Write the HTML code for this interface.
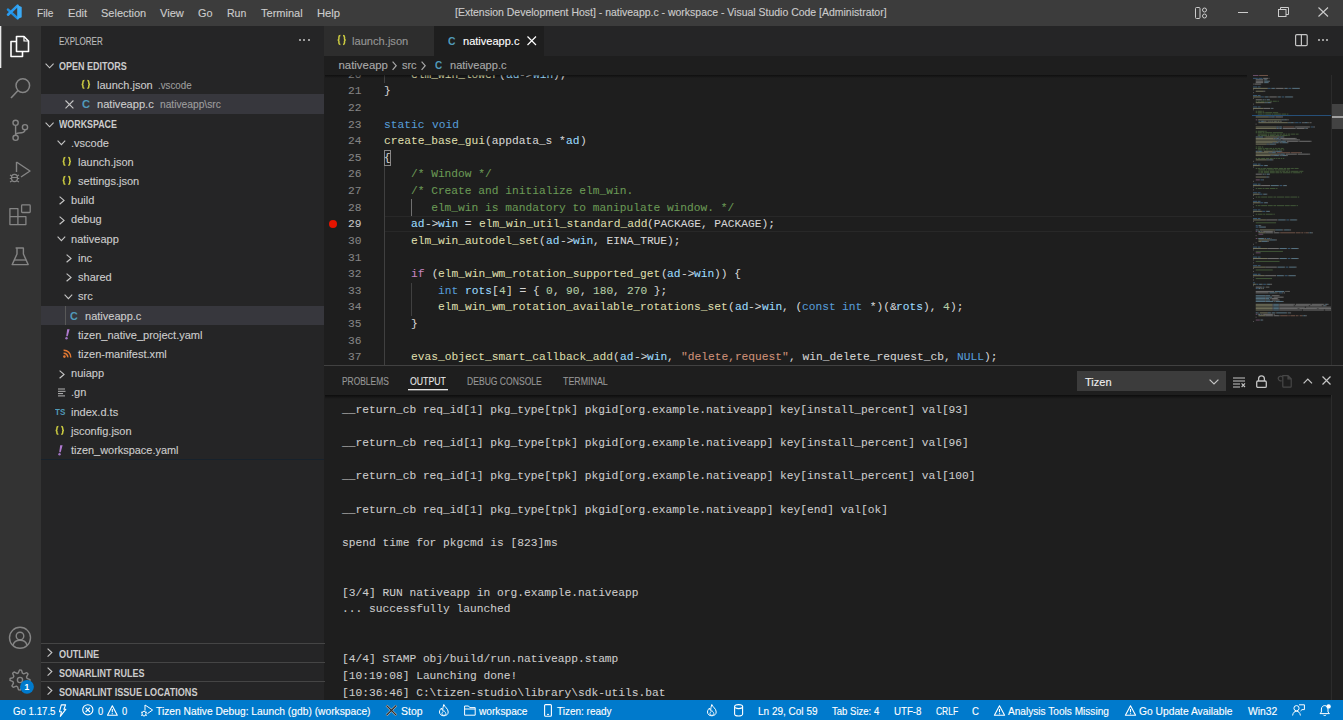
<!DOCTYPE html>
<html><head><meta charset="utf-8"><title>VS Code</title>
<style>
*{margin:0;padding:0;box-sizing:border-box}
html,body{width:1343px;height:720px;overflow:hidden;background:#1e1e1e;position:relative}
.t{position:absolute;white-space:pre}
svg{overflow:visible}
</style></head><body>
<div style="position:absolute;left:0px;top:0px;width:1343px;height:26px;background:#3c3c3c;"></div>
<div style="position:absolute;left:0px;top:26px;width:41px;height:674px;background:#333333;"></div>
<div style="position:absolute;left:41px;top:26px;width:283px;height:674px;background:#252526;"></div>
<div style="position:absolute;left:324px;top:26px;width:1019px;height:30px;background:#252526;"></div>
<div style="position:absolute;left:324px;top:56px;width:1019px;height:309px;background:#1e1e1e;"></div>
<div style="position:absolute;left:324px;top:365px;width:1019px;height:335px;background:#1e1e1e;"></div>
<div style="position:absolute;left:0px;top:700px;width:1343px;height:20px;background:#007acc;"></div>
<svg style="position:absolute;left:0px;top:0px;" width="26" height="26" viewBox="0 0 26 26"><path d="M8 9.6 L17.6 18.4" stroke="#1f8fe0" stroke-width="2.6" stroke-linecap="round"/><path d="M8 14.7 L17.6 5.6" stroke="#2a9cf0" stroke-width="2.6" stroke-linecap="round"/><path d="M17.2 4.9 L21.7 7 V17.2 L17.2 19.3 Z" fill="#3aaaf5"/></svg>
<div class="t" style="left:36.70px;top:7.75px;font:400 11.4px/11.4px 'Liberation Sans',sans-serif;color:#cccccc;transform:scaleX(0.8935);transform-origin:0 0;-webkit-text-stroke:0.12px currentColor;">File</div>
<div class="t" style="left:67.60px;top:7.75px;font:400 11.4px/11.4px 'Liberation Sans',sans-serif;color:#cccccc;transform:scaleX(0.9731);transform-origin:0 0;-webkit-text-stroke:0.12px currentColor;">Edit</div>
<div class="t" style="left:100.80px;top:7.75px;font:400 11.4px/11.4px 'Liberation Sans',sans-serif;color:#cccccc;transform:scaleX(0.9646);transform-origin:0 0;-webkit-text-stroke:0.12px currentColor;">Selection</div>
<div class="t" style="left:160.30px;top:7.75px;font:400 11.4px/11.4px 'Liberation Sans',sans-serif;color:#cccccc;transform:scaleX(0.9762);transform-origin:0 0;-webkit-text-stroke:0.12px currentColor;">View</div>
<div class="t" style="left:198.20px;top:7.75px;font:400 11.4px/11.4px 'Liberation Sans',sans-serif;color:#cccccc;transform:scaleX(0.9543);transform-origin:0 0;-webkit-text-stroke:0.12px currentColor;">Go</div>
<div class="t" style="left:227.00px;top:7.75px;font:400 11.4px/11.4px 'Liberation Sans',sans-serif;color:#cccccc;transform:scaleX(0.9236);transform-origin:0 0;-webkit-text-stroke:0.12px currentColor;">Run</div>
<div class="t" style="left:261.10px;top:7.75px;font:400 11.4px/11.4px 'Liberation Sans',sans-serif;color:#cccccc;transform:scaleX(0.9688);transform-origin:0 0;-webkit-text-stroke:0.12px currentColor;">Terminal</div>
<div class="t" style="left:316.60px;top:7.75px;font:400 11.4px/11.4px 'Liberation Sans',sans-serif;color:#cccccc;transform:scaleX(0.9861);transform-origin:0 0;-webkit-text-stroke:0.12px currentColor;">Help</div>
<div class="t" style="left:455.40px;top:6.91px;font:400 10.5px/10.5px 'Liberation Sans',sans-serif;color:#cccccc;transform:scaleX(0.9971);transform-origin:0 0;-webkit-text-stroke:0.12px currentColor;">[Extension Development Host] - nativeapp.c - workspace - Visual Studio Code [Administrator]</div>
<svg style="position:absolute;left:1195px;top:7px;" width="13" height="12" viewBox="0 0 13 12"><rect x="0.5" y="0.5" width="4.5" height="11" rx="1" fill="none" stroke="#cccccc"/><circle cx="9.5" cy="3" r="2" fill="none" stroke="#cccccc"/><circle cx="9.5" cy="9" r="2" fill="none" stroke="#cccccc"/></svg>
<div style="position:absolute;left:1238px;top:12px;width:10px;height:1px;background:#cccccc;"></div>
<svg style="position:absolute;left:1278px;top:7px;" width="11" height="10" viewBox="0 0 11 10"><rect x="0.5" y="2.5" width="7.5" height="7" fill="none" stroke="#cccccc"/><path d="M2.5 2.5 V0.5 H10.5 V7.5 H8" fill="none" stroke="#cccccc"/></svg>
<svg style="position:absolute;left:1318px;top:7px;" width="11" height="10" viewBox="0 0 11 10"><path d="M0.5 0.5 L10 9.5 M10 0.5 L0.5 9.5" stroke="#cccccc" stroke-width="1.1"/></svg>
<div style="position:absolute;left:0px;top:26px;width:1px;height:42px;background:#e8e8e8;"></div>
<div style="position:absolute;left:1px;top:26px;width:1px;height:42px;background:#6a6a6a;"></div>
<svg style="position:absolute;left:10px;top:35px;" width="20" height="23" viewBox="0 0 20 23"><path d="M6.5 1.5 H14 L18.5 6 V16.5 H6.5 Z" fill="none" stroke="#ffffff" stroke-width="1.6" stroke-linejoin="round"/><path d="M14 1.5 V6 H18.5" fill="none" stroke="#ffffff" stroke-width="1.2"/><path d="M6.5 6.5 H1 V21.5 H12.5 V16.5" fill="none" stroke="#ffffff" stroke-width="1.6" stroke-linejoin="round"/></svg>
<svg style="position:absolute;left:9px;top:76px;" width="24" height="24" viewBox="0 0 24 24"><circle cx="13.8" cy="9.6" r="6.8" fill="none" stroke="#858585" stroke-width="1.5"/><path d="M9 14.5 L2 22" stroke="#858585" stroke-width="1.6"/></svg>
<svg style="position:absolute;left:10px;top:117px;" width="22" height="24" viewBox="0 0 22 24"><circle cx="5.6" cy="5.8" r="2.6" fill="none" stroke="#858585" stroke-width="1.4"/><circle cx="5.6" cy="20.8" r="2.6" fill="none" stroke="#858585" stroke-width="1.4"/><circle cx="15" cy="10.2" r="2.6" fill="none" stroke="#858585" stroke-width="1.4"/><path d="M5.6 8.4 V18.2 M15 12.8 C15 16 12 16 9 16 C7 16 5.6 17 5.6 18" fill="none" stroke="#858585" stroke-width="1.4"/></svg>
<svg style="position:absolute;left:8px;top:160px;" width="26" height="24" viewBox="0 0 26 24"><path d="M8.5 2 V12 M8.5 2 L22 11 L13 17" fill="none" stroke="#858585" stroke-width="1.4" stroke-linejoin="round"/><ellipse cx="6.5" cy="18" rx="3" ry="3.6" fill="none" stroke="#858585" stroke-width="1.3"/><path d="M2 15 L3.8 16 M11 15 L9.2 16 M1.8 18.5 H3.5 M11.2 18.5 H9.5 M2 22 L3.8 21 M11 22 L9.2 21 M3.5 17.5 H9.5" stroke="#858585" stroke-width="1.1"/></svg>
<svg style="position:absolute;left:9px;top:204px;" width="23" height="22" viewBox="0 0 23 22"><path d="M0.9 4.6 H8.9 V12.6 H16.9 V20.6 H0.9 Z M0.9 12.6 H8.9 V20.6" fill="none" stroke="#858585" stroke-width="1.3" stroke-linejoin="round"/><rect x="12.6" y="0.9" width="8.6" height="7.6" rx="0.8" fill="none" stroke="#858585" stroke-width="1.3"/></svg>
<svg style="position:absolute;left:11px;top:246px;" width="19" height="21" viewBox="0 0 19 21"><path d="M4.6 2 H12.8 M6 2 V8 L1.2 18.6 H17.2 L12.4 8 V2" fill="none" stroke="#858585" stroke-width="1.4" stroke-linejoin="round"/><path d="M3.2 14 H15.2" stroke="#858585" stroke-width="1.3"/></svg>
<svg style="position:absolute;left:8px;top:626px;" width="24" height="24" viewBox="0 0 24 24"><circle cx="12" cy="11.8" r="10.5" fill="none" stroke="#858585" stroke-width="1.4"/><circle cx="12" cy="10" r="3.8" fill="none" stroke="#858585" stroke-width="1.4"/><path d="M5 19.2 C6 15.5 9 14.3 12 14.3 C15 14.3 18 15.5 19 19.2" fill="none" stroke="#858585" stroke-width="1.4"/></svg>
<svg style="position:absolute;left:8px;top:668px;" width="24" height="24" viewBox="0 0 24 24"><path d="M21.99 11.54 L21.89 13.49 L18.77 14.44 L18.17 15.72 L19.39 18.74 L17.93 20.05 L15.06 18.52 L13.73 18.99 L12.46 21.99 L10.51 21.89 L9.56 18.77 L8.28 18.17 L5.26 19.39 L3.95 17.93 L5.48 15.06 L5.01 13.73 L2.01 12.46 L2.11 10.51 L5.23 9.56 L5.83 8.28 L4.61 5.26 L6.07 3.95 L8.94 5.48 L10.27 5.01 L11.54 2.01 L13.49 2.11 L14.44 5.23 L15.72 5.83 L18.74 4.61 L20.05 6.07 L18.52 8.94 L18.99 10.27 Z" fill="none" stroke="#858585" stroke-width="1.4" stroke-linejoin="round"/><circle cx="12" cy="12" r="2.6" fill="none" stroke="#858585" stroke-width="1.4"/></svg>
<svg style="position:absolute;left:20px;top:680px;" width="14" height="14" viewBox="0 0 14 14"><circle cx="7" cy="6.8" r="6.9" fill="#007acc"/></svg>
<div class="t" style="left:24.60px;top:683.30px;font:700 8.5px/8.5px 'Liberation Sans',sans-serif;color:#ffffff;">1</div>
<div class="t" style="left:58.60px;top:35.76px;font:400 10.8px/10.8px 'Liberation Sans',sans-serif;color:#bbbbbb;transform:scaleX(0.7432);transform-origin:0 0;-webkit-text-stroke:0.12px currentColor;">EXPLORER</div>
<div style="position:absolute;left:299.0px;top:39px;width:2px;height:2px;background:#c5c5c5;border-radius:1px"></div>
<div style="position:absolute;left:303.3px;top:39px;width:2px;height:2px;background:#c5c5c5;border-radius:1px"></div>
<div style="position:absolute;left:307.6px;top:39px;width:2px;height:2px;background:#c5c5c5;border-radius:1px"></div>
<svg style="position:absolute;left:45.3px;top:63.0px;" width="9.2" height="5.6" viewBox="0 0 9.2 5.6"><path d="M0.6 0.6 L4.6 4.8 L8.6 0.6" fill="none" stroke="#c5c5c5" stroke-width="1.1"/></svg>
<div class="t" style="left:58.50px;top:61.07px;font:700 10.9px/10.9px 'Liberation Sans',sans-serif;color:#cccccc;transform:scaleX(0.8258);transform-origin:0 0;">OPEN EDITORS</div>
<svg style="position:absolute;left:81.3px;top:79.80000000000001px;" width="9.7" height="8.8" viewBox="0 0 9.7 8.8"><path d="M3.4 0.6 Q1.9 0.6 1.9 1.9 V3.30 Q1.9 4.40 0.6 4.40 Q1.9 4.40 1.9 5.50 V6.90 Q1.9 8.20 3.4 8.20 M6.30 0.6 Q7.80 0.6 7.80 1.9 V3.30 Q7.80 4.40 9.10 4.40 Q7.80 4.40 7.80 5.50 V6.90 Q7.80 8.20 6.30 8.20" fill="none" stroke="#cbcb41" stroke-width="1.5"/></svg>
<div class="t" style="left:97.30px;top:79.55px;font:400 11.4px/11.4px 'Liberation Sans',sans-serif;color:#cccccc;transform:scaleX(0.9666);transform-origin:0 0;-webkit-text-stroke:0.12px currentColor;">launch.json</div>
<div class="t" style="left:158.40px;top:80.31px;font:400 10.5px/10.5px 'Liberation Sans',sans-serif;color:#9d9d9d;transform:scaleX(0.9285);transform-origin:0 0;-webkit-text-stroke:0.12px currentColor;">.vscode</div>
<div style="position:absolute;left:41px;top:94px;width:283px;height:20px;background:#37373d;"></div>
<svg style="position:absolute;left:65.2px;top:100px;" width="9" height="9" viewBox="0 0 9 9"><path d="M0.5 0.5 L8.4 8.4 M8.4 0.5 L0.5 8.4" stroke="#c5c5c5" stroke-width="1.1"/></svg>
<div class="t" style="left:81.60px;top:98.89px;font:700 11px/11px 'Liberation Sans',sans-serif;color:#519aba;transform:scaleX(1.0197);transform-origin:0 0;">C</div>
<div class="t" style="left:97.30px;top:98.65px;font:400 11.4px/11.4px 'Liberation Sans',sans-serif;color:#cccccc;transform:scaleX(0.9732);transform-origin:0 0;-webkit-text-stroke:0.12px currentColor;">nativeapp.c</div>
<div class="t" style="left:159.50px;top:99.41px;font:400 10.5px/10.5px 'Liberation Sans',sans-serif;color:#9d9d9d;transform:scaleX(0.9736);transform-origin:0 0;-webkit-text-stroke:0.12px currentColor;">nativeapp\src</div>
<svg style="position:absolute;left:45.3px;top:121.6px;" width="9.2" height="5.6" viewBox="0 0 9.2 5.6"><path d="M0.6 0.6 L4.6 4.8 L8.6 0.6" fill="none" stroke="#c5c5c5" stroke-width="1.1"/></svg>
<div class="t" style="left:58.50px;top:119.07px;font:700 10.9px/10.9px 'Liberation Sans',sans-serif;color:#cccccc;transform:scaleX(0.8133);transform-origin:0 0;">WORKSPACE</div>
<div style="position:absolute;left:41px;top:306px;width:283px;height:19px;background:#37373d;"></div>
<div style="position:absolute;left:65px;top:306px;width:1px;height:19px;background:#585858;"></div>
<svg style="position:absolute;left:57.2px;top:140.29999999999998px;" width="8.8" height="5.4" viewBox="0 0 8.8 5.4"><path d="M0.6 0.6 L4.4 4.6000000000000005 L8.200000000000001 0.6" fill="none" stroke="#c5c5c5" stroke-width="1.1"/></svg>
<div class="t" style="left:70.80px;top:137.65px;font:400 11.4px/11.4px 'Liberation Sans',sans-serif;color:#cccccc;transform:scaleX(0.9670);transform-origin:0 0;-webkit-text-stroke:0.12px currentColor;">.vscode</div>
<svg style="position:absolute;left:62.2px;top:156.6px;" width="9.6" height="8.8" viewBox="0 0 9.6 8.8"><path d="M3.4 0.6 Q1.9 0.6 1.9 1.9 V3.30 Q1.9 4.40 0.6 4.40 Q1.9 4.40 1.9 5.50 V6.90 Q1.9 8.20 3.4 8.20 M6.20 0.6 Q7.70 0.6 7.70 1.9 V3.30 Q7.70 4.40 9.00 4.40 Q7.70 4.40 7.70 5.50 V6.90 Q7.70 8.20 6.20 8.20" fill="none" stroke="#cbcb41" stroke-width="1.5"/></svg>
<div class="t" style="left:77.50px;top:156.75px;font:400 11.4px/11.4px 'Liberation Sans',sans-serif;color:#cccccc;transform:scaleX(0.9670);transform-origin:0 0;-webkit-text-stroke:0.12px currentColor;">launch.json</div>
<svg style="position:absolute;left:62.2px;top:175.79999999999998px;" width="9.6" height="8.8" viewBox="0 0 9.6 8.8"><path d="M3.4 0.6 Q1.9 0.6 1.9 1.9 V3.30 Q1.9 4.40 0.6 4.40 Q1.9 4.40 1.9 5.50 V6.90 Q1.9 8.20 3.4 8.20 M6.20 0.6 Q7.70 0.6 7.70 1.9 V3.30 Q7.70 4.40 9.00 4.40 Q7.70 4.40 7.70 5.50 V6.90 Q7.70 8.20 6.20 8.20" fill="none" stroke="#cbcb41" stroke-width="1.5"/></svg>
<div class="t" style="left:77.50px;top:175.95px;font:400 11.4px/11.4px 'Liberation Sans',sans-serif;color:#cccccc;transform:scaleX(0.9670);transform-origin:0 0;-webkit-text-stroke:0.12px currentColor;">settings.json</div>
<svg style="position:absolute;left:58.8px;top:196.39999999999998px;" width="5.8" height="8.8" viewBox="0 0 5.8 8.8"><path d="M0.6 0.6 L5.0 4.4 L0.6 8.200000000000001" fill="none" stroke="#c5c5c5" stroke-width="1.2"/></svg>
<div class="t" style="left:70.80px;top:195.15px;font:400 11.4px/11.4px 'Liberation Sans',sans-serif;color:#cccccc;transform:scaleX(0.9670);transform-origin:0 0;-webkit-text-stroke:0.12px currentColor;">build</div>
<svg style="position:absolute;left:58.8px;top:215.6px;" width="5.8" height="8.8" viewBox="0 0 5.8 8.8"><path d="M0.6 0.6 L5.0 4.4 L0.6 8.200000000000001" fill="none" stroke="#c5c5c5" stroke-width="1.2"/></svg>
<div class="t" style="left:70.80px;top:214.35px;font:400 11.4px/11.4px 'Liberation Sans',sans-serif;color:#cccccc;transform:scaleX(0.9670);transform-origin:0 0;-webkit-text-stroke:0.12px currentColor;">debug</div>
<svg style="position:absolute;left:57.2px;top:236.2px;" width="8.8" height="5.4" viewBox="0 0 8.8 5.4"><path d="M0.6 0.6 L4.4 4.6000000000000005 L8.200000000000001 0.6" fill="none" stroke="#c5c5c5" stroke-width="1.1"/></svg>
<div class="t" style="left:70.80px;top:233.55px;font:400 11.4px/11.4px 'Liberation Sans',sans-serif;color:#cccccc;transform:scaleX(0.9670);transform-origin:0 0;-webkit-text-stroke:0.12px currentColor;">nativeapp</div>
<svg style="position:absolute;left:65.8px;top:254.00000000000003px;" width="5.8" height="8.8" viewBox="0 0 5.8 8.8"><path d="M0.6 0.6 L5.0 4.4 L0.6 8.200000000000001" fill="none" stroke="#c5c5c5" stroke-width="1.2"/></svg>
<div class="t" style="left:78.00px;top:252.75px;font:400 11.4px/11.4px 'Liberation Sans',sans-serif;color:#cccccc;transform:scaleX(0.9670);transform-origin:0 0;-webkit-text-stroke:0.12px currentColor;">inc</div>
<svg style="position:absolute;left:65.8px;top:273.20000000000005px;" width="5.8" height="8.8" viewBox="0 0 5.8 8.8"><path d="M0.6 0.6 L5.0 4.4 L0.6 8.200000000000001" fill="none" stroke="#c5c5c5" stroke-width="1.2"/></svg>
<div class="t" style="left:78.00px;top:271.95px;font:400 11.4px/11.4px 'Liberation Sans',sans-serif;color:#cccccc;transform:scaleX(0.9670);transform-origin:0 0;-webkit-text-stroke:0.12px currentColor;">shared</div>
<svg style="position:absolute;left:63.8px;top:294.0px;" width="8.8" height="5.4" viewBox="0 0 8.8 5.4"><path d="M0.6 0.6 L4.4 4.6000000000000005 L8.200000000000001 0.6" fill="none" stroke="#c5c5c5" stroke-width="1.1"/></svg>
<div class="t" style="left:78.00px;top:291.35px;font:400 11.4px/11.4px 'Liberation Sans',sans-serif;color:#cccccc;transform:scaleX(0.9670);transform-origin:0 0;-webkit-text-stroke:0.12px currentColor;">src</div>
<div class="t" style="left:70.00px;top:310.89px;font:700 11px/11px 'Liberation Sans',sans-serif;color:#519aba;transform:scaleX(0.9819);transform-origin:0 0;">C</div>
<div class="t" style="left:85.00px;top:310.65px;font:400 11.4px/11.4px 'Liberation Sans',sans-serif;color:#cccccc;transform:scaleX(0.9670);transform-origin:0 0;-webkit-text-stroke:0.12px currentColor;">nativeapp.c</div>
<svg style="position:absolute;left:65.0px;top:329.3px;" width="5" height="11" viewBox="0 0 5 11"><path d="M2.2 0.3 L4.6 0.3 L2.7 7.2 L1.2 7.2 Z" fill="#b07ad0"/><circle cx="1.5" cy="9.2" r="1.2" fill="#a074c4"/></svg>
<div class="t" style="left:78.00px;top:329.85px;font:400 11.4px/11.4px 'Liberation Sans',sans-serif;color:#cccccc;transform:scaleX(0.9687);transform-origin:0 0;-webkit-text-stroke:0.12px currentColor;">tizen_native_project.yaml</div>
<svg style="position:absolute;left:63.0px;top:349.1px;" width="9" height="9" viewBox="0 0 9 9"><circle cx="1.4" cy="7.6" r="1.3" fill="#e37933"/><path d="M0.6 4.2 A4 4 0 0 1 4.8 8.4 M0.6 1.2 A7 7 0 0 1 7.8 8.4" fill="none" stroke="#e37933" stroke-width="1.5"/></svg>
<div class="t" style="left:78.00px;top:348.95px;font:400 11.4px/11.4px 'Liberation Sans',sans-serif;color:#cccccc;transform:scaleX(0.9670);transform-origin:0 0;-webkit-text-stroke:0.12px currentColor;">tizen-manifest.xml</div>
<svg style="position:absolute;left:58.8px;top:369.50000000000006px;" width="5.8" height="8.8" viewBox="0 0 5.8 8.8"><path d="M0.6 0.6 L5.0 4.4 L0.6 8.200000000000001" fill="none" stroke="#c5c5c5" stroke-width="1.2"/></svg>
<div class="t" style="left:70.80px;top:368.25px;font:400 11.4px/11.4px 'Liberation Sans',sans-serif;color:#cccccc;transform:scaleX(0.9670);transform-origin:0 0;-webkit-text-stroke:0.12px currentColor;">nuiapp</div>
<svg style="position:absolute;left:57.5px;top:387.6px;" width="8" height="9" viewBox="0 0 8 9"><path d="M0 1 H7 M0 3.3 H7.5 M0 5.6 H5 M0 7.9 H7" stroke="#c5c5c5" stroke-width="0.9"/></svg>
<div class="t" style="left:70.80px;top:387.45px;font:400 11.4px/11.4px 'Liberation Sans',sans-serif;color:#cccccc;transform:scaleX(0.9670);transform-origin:0 0;-webkit-text-stroke:0.12px currentColor;">.gn</div>
<div class="t" style="left:55.00px;top:408.42px;font:700 8.6px/8.6px 'Liberation Sans',sans-serif;color:#519aba;transform:scaleX(0.9380);transform-origin:0 0;">TS</div>
<div class="t" style="left:70.80px;top:406.65px;font:400 11.4px/11.4px 'Liberation Sans',sans-serif;color:#cccccc;transform:scaleX(0.9670);transform-origin:0 0;-webkit-text-stroke:0.12px currentColor;">index.d.ts</div>
<svg style="position:absolute;left:55.0px;top:425.7px;" width="9.6" height="8.8" viewBox="0 0 9.6 8.8"><path d="M3.4 0.6 Q1.9 0.6 1.9 1.9 V3.30 Q1.9 4.40 0.6 4.40 Q1.9 4.40 1.9 5.50 V6.90 Q1.9 8.20 3.4 8.20 M6.20 0.6 Q7.70 0.6 7.70 1.9 V3.30 Q7.70 4.40 9.00 4.40 Q7.70 4.40 7.70 5.50 V6.90 Q7.70 8.20 6.20 8.20" fill="none" stroke="#cbcb41" stroke-width="1.5"/></svg>
<div class="t" style="left:70.80px;top:425.85px;font:400 11.4px/11.4px 'Liberation Sans',sans-serif;color:#cccccc;transform:scaleX(0.9670);transform-origin:0 0;-webkit-text-stroke:0.12px currentColor;">jsconfig.json</div>
<svg style="position:absolute;left:57.5px;top:444.50000000000006px;" width="5" height="11" viewBox="0 0 5 11"><path d="M2.2 0.3 L4.6 0.3 L2.7 7.2 L1.2 7.2 Z" fill="#b07ad0"/><circle cx="1.5" cy="9.2" r="1.2" fill="#a074c4"/></svg>
<div class="t" style="left:70.80px;top:445.05px;font:400 11.4px/11.4px 'Liberation Sans',sans-serif;color:#cccccc;transform:scaleX(0.9594);transform-origin:0 0;-webkit-text-stroke:0.12px currentColor;">tizen_workspace.yaml</div>
<div style="position:absolute;left:41px;top:459px;width:283px;height:1px;background:#17222c;"></div>
<div style="position:absolute;left:41px;top:643px;width:284px;height:1px;background:#454545;"></div>
<div style="position:absolute;left:41px;top:662px;width:284px;height:1px;background:#454545;"></div>
<div style="position:absolute;left:41px;top:681px;width:284px;height:1px;background:#454545;"></div>
<svg style="position:absolute;left:47.4px;top:648.1999999999999px;" width="5.6" height="9.2" viewBox="0 0 5.6 9.2"><path d="M0.6 0.6 L4.8 4.6 L0.6 8.6" fill="none" stroke="#c5c5c5" stroke-width="1.2"/></svg>
<div class="t" style="left:58.60px;top:648.57px;font:700 10.9px/10.9px 'Liberation Sans',sans-serif;color:#cccccc;transform:scaleX(0.8411);transform-origin:0 0;">OUTLINE</div>
<svg style="position:absolute;left:47.4px;top:667.1999999999999px;" width="5.6" height="9.2" viewBox="0 0 5.6 9.2"><path d="M0.6 0.6 L4.8 4.6 L0.6 8.6" fill="none" stroke="#c5c5c5" stroke-width="1.2"/></svg>
<div class="t" style="left:58.60px;top:667.57px;font:700 10.9px/10.9px 'Liberation Sans',sans-serif;color:#cccccc;transform:scaleX(0.8274);transform-origin:0 0;">SONARLINT RULES</div>
<svg style="position:absolute;left:47.4px;top:686.4px;" width="5.6" height="9.2" viewBox="0 0 5.6 9.2"><path d="M0.6 0.6 L4.8 4.6 L0.6 8.6" fill="none" stroke="#c5c5c5" stroke-width="1.2"/></svg>
<div class="t" style="left:58.60px;top:686.77px;font:700 10.9px/10.9px 'Liberation Sans',sans-serif;color:#cccccc;transform:scaleX(0.8364);transform-origin:0 0;">SONARLINT ISSUE LOCATIONS</div>
<div style="position:absolute;left:384px;top:216px;width:868px;height:16px;border:1px solid #282828;border-left:none;border-right:none"></div>
<div style="position:absolute;left:384px;top:75px;width:1px;height:8.0px;background:#404040;"></div>
<div style="position:absolute;left:384px;top:166.12px;width:1px;height:198.88px;background:#404040"></div>
<div style="position:absolute;left:411px;top:199.38px;width:1px;height:16.625px;background:#707070"></div>
<div style="position:absolute;left:411px;top:282.50px;width:1px;height:33.25px;background:#404040"></div>
<div style="position:absolute;left:384px;top:149.50px;width:7px;height:16.625px;border:1px solid #888888"></div>
<svg style="position:absolute;left:329px;top:219.6px;" width="8" height="8" viewBox="0 0 8 8"><circle cx="4" cy="4" r="4" fill="#e51400"/></svg>
<div class="t" style="left:347.73px;top:69.63px;font:400 11.8px/11.8px 'Liberation Mono',monospace;color:#858585;transform:scaleX(0.9514);transform-origin:0 0;-webkit-text-stroke:0.08px currentColor;">20</div>
<div class="t" style="left:411.34px;top:69.63px;font:400 11.8px/11.8px 'Liberation Mono',monospace;color:#dcdcaa;transform:scaleX(0.9514);transform-origin:0 0;-webkit-text-stroke:0.08px currentColor;">elm_win_lower</div>
<div class="t" style="left:498.89px;top:69.63px;font:400 11.8px/11.8px 'Liberation Mono',monospace;color:#d4d4d4;transform:scaleX(0.9514);transform-origin:0 0;-webkit-text-stroke:0.08px currentColor;">(</div>
<div class="t" style="left:505.63px;top:69.63px;font:400 11.8px/11.8px 'Liberation Mono',monospace;color:#9cdcfe;transform:scaleX(0.9514);transform-origin:0 0;-webkit-text-stroke:0.08px currentColor;">ad</div>
<div class="t" style="left:519.10px;top:69.63px;font:400 11.8px/11.8px 'Liberation Mono',monospace;color:#d4d4d4;transform:scaleX(0.9514);transform-origin:0 0;-webkit-text-stroke:0.08px currentColor;">-></div>
<div class="t" style="left:532.57px;top:69.63px;font:400 11.8px/11.8px 'Liberation Mono',monospace;color:#9cdcfe;transform:scaleX(0.9514);transform-origin:0 0;-webkit-text-stroke:0.08px currentColor;">win</div>
<div class="t" style="left:552.78px;top:69.63px;font:400 11.8px/11.8px 'Liberation Mono',monospace;color:#d4d4d4;transform:scaleX(0.9514);transform-origin:0 0;-webkit-text-stroke:0.08px currentColor;">);</div>
<div class="t" style="left:347.73px;top:86.26px;font:400 11.8px/11.8px 'Liberation Mono',monospace;color:#858585;transform:scaleX(0.9514);transform-origin:0 0;-webkit-text-stroke:0.08px currentColor;">21</div>
<div class="t" style="left:384.40px;top:86.26px;font:400 11.8px/11.8px 'Liberation Mono',monospace;color:#d4d4d4;transform:scaleX(0.9514);transform-origin:0 0;-webkit-text-stroke:0.08px currentColor;">}</div>
<div class="t" style="left:347.73px;top:102.88px;font:400 11.8px/11.8px 'Liberation Mono',monospace;color:#858585;transform:scaleX(0.9514);transform-origin:0 0;-webkit-text-stroke:0.08px currentColor;">22</div>
<div class="t" style="left:347.73px;top:119.51px;font:400 11.8px/11.8px 'Liberation Mono',monospace;color:#858585;transform:scaleX(0.9514);transform-origin:0 0;-webkit-text-stroke:0.08px currentColor;">23</div>
<div class="t" style="left:384.40px;top:119.51px;font:400 11.8px/11.8px 'Liberation Mono',monospace;color:#569cd6;transform:scaleX(0.9514);transform-origin:0 0;-webkit-text-stroke:0.08px currentColor;">static</div>
<div class="t" style="left:431.55px;top:119.51px;font:400 11.8px/11.8px 'Liberation Mono',monospace;color:#569cd6;transform:scaleX(0.9514);transform-origin:0 0;-webkit-text-stroke:0.08px currentColor;">void</div>
<div class="t" style="left:347.73px;top:136.13px;font:400 11.8px/11.8px 'Liberation Mono',monospace;color:#858585;transform:scaleX(0.9514);transform-origin:0 0;-webkit-text-stroke:0.08px currentColor;">24</div>
<div class="t" style="left:384.40px;top:136.13px;font:400 11.8px/11.8px 'Liberation Mono',monospace;color:#dcdcaa;transform:scaleX(0.9514);transform-origin:0 0;-webkit-text-stroke:0.08px currentColor;">create_base_gui</div>
<div class="t" style="left:485.42px;top:136.13px;font:400 11.8px/11.8px 'Liberation Mono',monospace;color:#d4d4d4;transform:scaleX(0.9514);transform-origin:0 0;-webkit-text-stroke:0.08px currentColor;">(appdata_s *</div>
<div class="t" style="left:566.25px;top:136.13px;font:400 11.8px/11.8px 'Liberation Mono',monospace;color:#9cdcfe;transform:scaleX(0.9514);transform-origin:0 0;-webkit-text-stroke:0.08px currentColor;">ad</div>
<div class="t" style="left:579.72px;top:136.13px;font:400 11.8px/11.8px 'Liberation Mono',monospace;color:#d4d4d4;transform:scaleX(0.9514);transform-origin:0 0;-webkit-text-stroke:0.08px currentColor;">)</div>
<div class="t" style="left:347.73px;top:152.76px;font:400 11.8px/11.8px 'Liberation Mono',monospace;color:#858585;transform:scaleX(0.9514);transform-origin:0 0;-webkit-text-stroke:0.08px currentColor;">25</div>
<div class="t" style="left:384.40px;top:152.76px;font:400 11.8px/11.8px 'Liberation Mono',monospace;color:#d4d4d4;transform:scaleX(0.9514);transform-origin:0 0;-webkit-text-stroke:0.08px currentColor;">{</div>
<div class="t" style="left:347.73px;top:169.38px;font:400 11.8px/11.8px 'Liberation Mono',monospace;color:#858585;transform:scaleX(0.9514);transform-origin:0 0;-webkit-text-stroke:0.08px currentColor;">26</div>
<div class="t" style="left:384.40px;top:169.38px;font:400 11.8px/11.8px 'Liberation Mono',monospace;color:#6a9955;transform:scaleX(0.9514);transform-origin:0 0;-webkit-text-stroke:0.08px currentColor;">    /* Window */</div>
<div class="t" style="left:347.73px;top:186.01px;font:400 11.8px/11.8px 'Liberation Mono',monospace;color:#858585;transform:scaleX(0.9514);transform-origin:0 0;-webkit-text-stroke:0.08px currentColor;">27</div>
<div class="t" style="left:384.40px;top:186.01px;font:400 11.8px/11.8px 'Liberation Mono',monospace;color:#6a9955;transform:scaleX(0.9514);transform-origin:0 0;-webkit-text-stroke:0.08px currentColor;">    /* Create and initialize elm_win.</div>
<div class="t" style="left:347.73px;top:202.63px;font:400 11.8px/11.8px 'Liberation Mono',monospace;color:#858585;transform:scaleX(0.9514);transform-origin:0 0;-webkit-text-stroke:0.08px currentColor;">28</div>
<div class="t" style="left:384.40px;top:202.63px;font:400 11.8px/11.8px 'Liberation Mono',monospace;color:#6a9955;transform:scaleX(0.9514);transform-origin:0 0;-webkit-text-stroke:0.08px currentColor;">       elm_win is mandatory to manipulate window. */</div>
<div class="t" style="left:347.73px;top:219.26px;font:400 11.8px/11.8px 'Liberation Mono',monospace;color:#c6c6c6;transform:scaleX(0.9514);transform-origin:0 0;-webkit-text-stroke:0.08px currentColor;">29</div>
<div class="t" style="left:411.34px;top:219.26px;font:400 11.8px/11.8px 'Liberation Mono',monospace;color:#9cdcfe;transform:scaleX(0.9514);transform-origin:0 0;-webkit-text-stroke:0.08px currentColor;">ad</div>
<div class="t" style="left:424.81px;top:219.26px;font:400 11.8px/11.8px 'Liberation Mono',monospace;color:#d4d4d4;transform:scaleX(0.9514);transform-origin:0 0;-webkit-text-stroke:0.08px currentColor;">-></div>
<div class="t" style="left:438.28px;top:219.26px;font:400 11.8px/11.8px 'Liberation Mono',monospace;color:#9cdcfe;transform:scaleX(0.9514);transform-origin:0 0;-webkit-text-stroke:0.08px currentColor;">win</div>
<div class="t" style="left:458.49px;top:219.26px;font:400 11.8px/11.8px 'Liberation Mono',monospace;color:#d4d4d4;transform:scaleX(0.9514);transform-origin:0 0;-webkit-text-stroke:0.08px currentColor;"> = </div>
<div class="t" style="left:478.69px;top:219.26px;font:400 11.8px/11.8px 'Liberation Mono',monospace;color:#dcdcaa;transform:scaleX(0.9514);transform-origin:0 0;-webkit-text-stroke:0.08px currentColor;">elm_win_util_standard_add</div>
<div class="t" style="left:647.07px;top:219.26px;font:400 11.8px/11.8px 'Liberation Mono',monospace;color:#d4d4d4;transform:scaleX(0.9514);transform-origin:0 0;-webkit-text-stroke:0.08px currentColor;">(PACKAGE, PACKAGE);</div>
<div class="t" style="left:347.73px;top:235.88px;font:400 11.8px/11.8px 'Liberation Mono',monospace;color:#858585;transform:scaleX(0.9514);transform-origin:0 0;-webkit-text-stroke:0.08px currentColor;">30</div>
<div class="t" style="left:411.34px;top:235.88px;font:400 11.8px/11.8px 'Liberation Mono',monospace;color:#dcdcaa;transform:scaleX(0.9514);transform-origin:0 0;-webkit-text-stroke:0.08px currentColor;">elm_win_autodel_set</div>
<div class="t" style="left:539.30px;top:235.88px;font:400 11.8px/11.8px 'Liberation Mono',monospace;color:#d4d4d4;transform:scaleX(0.9514);transform-origin:0 0;-webkit-text-stroke:0.08px currentColor;">(</div>
<div class="t" style="left:546.04px;top:235.88px;font:400 11.8px/11.8px 'Liberation Mono',monospace;color:#9cdcfe;transform:scaleX(0.9514);transform-origin:0 0;-webkit-text-stroke:0.08px currentColor;">ad</div>
<div class="t" style="left:559.51px;top:235.88px;font:400 11.8px/11.8px 'Liberation Mono',monospace;color:#d4d4d4;transform:scaleX(0.9514);transform-origin:0 0;-webkit-text-stroke:0.08px currentColor;">-></div>
<div class="t" style="left:572.98px;top:235.88px;font:400 11.8px/11.8px 'Liberation Mono',monospace;color:#9cdcfe;transform:scaleX(0.9514);transform-origin:0 0;-webkit-text-stroke:0.08px currentColor;">win</div>
<div class="t" style="left:593.19px;top:235.88px;font:400 11.8px/11.8px 'Liberation Mono',monospace;color:#d4d4d4;transform:scaleX(0.9514);transform-origin:0 0;-webkit-text-stroke:0.08px currentColor;">, EINA_TRUE);</div>
<div class="t" style="left:347.73px;top:252.51px;font:400 11.8px/11.8px 'Liberation Mono',monospace;color:#858585;transform:scaleX(0.9514);transform-origin:0 0;-webkit-text-stroke:0.08px currentColor;">31</div>
<div class="t" style="left:347.73px;top:269.13px;font:400 11.8px/11.8px 'Liberation Mono',monospace;color:#858585;transform:scaleX(0.9514);transform-origin:0 0;-webkit-text-stroke:0.08px currentColor;">32</div>
<div class="t" style="left:411.34px;top:269.13px;font:400 11.8px/11.8px 'Liberation Mono',monospace;color:#c586c0;transform:scaleX(0.9514);transform-origin:0 0;-webkit-text-stroke:0.08px currentColor;">if</div>
<div class="t" style="left:424.81px;top:269.13px;font:400 11.8px/11.8px 'Liberation Mono',monospace;color:#d4d4d4;transform:scaleX(0.9514);transform-origin:0 0;-webkit-text-stroke:0.08px currentColor;"> (</div>
<div class="t" style="left:438.28px;top:269.13px;font:400 11.8px/11.8px 'Liberation Mono',monospace;color:#dcdcaa;transform:scaleX(0.9514);transform-origin:0 0;-webkit-text-stroke:0.08px currentColor;">elm_win_wm_rotation_supported_get</div>
<div class="t" style="left:660.54px;top:269.13px;font:400 11.8px/11.8px 'Liberation Mono',monospace;color:#d4d4d4;transform:scaleX(0.9514);transform-origin:0 0;-webkit-text-stroke:0.08px currentColor;">(</div>
<div class="t" style="left:667.27px;top:269.13px;font:400 11.8px/11.8px 'Liberation Mono',monospace;color:#9cdcfe;transform:scaleX(0.9514);transform-origin:0 0;-webkit-text-stroke:0.08px currentColor;">ad</div>
<div class="t" style="left:680.74px;top:269.13px;font:400 11.8px/11.8px 'Liberation Mono',monospace;color:#d4d4d4;transform:scaleX(0.9514);transform-origin:0 0;-webkit-text-stroke:0.08px currentColor;">-></div>
<div class="t" style="left:694.21px;top:269.13px;font:400 11.8px/11.8px 'Liberation Mono',monospace;color:#9cdcfe;transform:scaleX(0.9514);transform-origin:0 0;-webkit-text-stroke:0.08px currentColor;">win</div>
<div class="t" style="left:714.42px;top:269.13px;font:400 11.8px/11.8px 'Liberation Mono',monospace;color:#d4d4d4;transform:scaleX(0.9514);transform-origin:0 0;-webkit-text-stroke:0.08px currentColor;">)) {</div>
<div class="t" style="left:347.73px;top:285.76px;font:400 11.8px/11.8px 'Liberation Mono',monospace;color:#858585;transform:scaleX(0.9514);transform-origin:0 0;-webkit-text-stroke:0.08px currentColor;">33</div>
<div class="t" style="left:438.28px;top:285.76px;font:400 11.8px/11.8px 'Liberation Mono',monospace;color:#569cd6;transform:scaleX(0.9514);transform-origin:0 0;-webkit-text-stroke:0.08px currentColor;">int</div>
<div class="t" style="left:465.22px;top:285.76px;font:400 11.8px/11.8px 'Liberation Mono',monospace;color:#9cdcfe;transform:scaleX(0.9514);transform-origin:0 0;-webkit-text-stroke:0.08px currentColor;">rots</div>
<div class="t" style="left:492.16px;top:285.76px;font:400 11.8px/11.8px 'Liberation Mono',monospace;color:#d4d4d4;transform:scaleX(0.9514);transform-origin:0 0;-webkit-text-stroke:0.08px currentColor;">[</div>
<div class="t" style="left:498.89px;top:285.76px;font:400 11.8px/11.8px 'Liberation Mono',monospace;color:#b5cea8;transform:scaleX(0.9514);transform-origin:0 0;-webkit-text-stroke:0.08px currentColor;">4</div>
<div class="t" style="left:505.63px;top:285.76px;font:400 11.8px/11.8px 'Liberation Mono',monospace;color:#d4d4d4;transform:scaleX(0.9514);transform-origin:0 0;-webkit-text-stroke:0.08px currentColor;">] = { </div>
<div class="t" style="left:546.04px;top:285.76px;font:400 11.8px/11.8px 'Liberation Mono',monospace;color:#b5cea8;transform:scaleX(0.9514);transform-origin:0 0;-webkit-text-stroke:0.08px currentColor;">0</div>
<div class="t" style="left:552.77px;top:285.76px;font:400 11.8px/11.8px 'Liberation Mono',monospace;color:#d4d4d4;transform:scaleX(0.9514);transform-origin:0 0;-webkit-text-stroke:0.08px currentColor;">, </div>
<div class="t" style="left:566.25px;top:285.76px;font:400 11.8px/11.8px 'Liberation Mono',monospace;color:#b5cea8;transform:scaleX(0.9514);transform-origin:0 0;-webkit-text-stroke:0.08px currentColor;">90</div>
<div class="t" style="left:579.72px;top:285.76px;font:400 11.8px/11.8px 'Liberation Mono',monospace;color:#d4d4d4;transform:scaleX(0.9514);transform-origin:0 0;-webkit-text-stroke:0.08px currentColor;">, </div>
<div class="t" style="left:593.19px;top:285.76px;font:400 11.8px/11.8px 'Liberation Mono',monospace;color:#b5cea8;transform:scaleX(0.9514);transform-origin:0 0;-webkit-text-stroke:0.08px currentColor;">180</div>
<div class="t" style="left:613.39px;top:285.76px;font:400 11.8px/11.8px 'Liberation Mono',monospace;color:#d4d4d4;transform:scaleX(0.9514);transform-origin:0 0;-webkit-text-stroke:0.08px currentColor;">, </div>
<div class="t" style="left:626.86px;top:285.76px;font:400 11.8px/11.8px 'Liberation Mono',monospace;color:#b5cea8;transform:scaleX(0.9514);transform-origin:0 0;-webkit-text-stroke:0.08px currentColor;">270</div>
<div class="t" style="left:647.07px;top:285.76px;font:400 11.8px/11.8px 'Liberation Mono',monospace;color:#d4d4d4;transform:scaleX(0.9514);transform-origin:0 0;-webkit-text-stroke:0.08px currentColor;"> };</div>
<div class="t" style="left:347.73px;top:302.38px;font:400 11.8px/11.8px 'Liberation Mono',monospace;color:#858585;transform:scaleX(0.9514);transform-origin:0 0;-webkit-text-stroke:0.08px currentColor;">34</div>
<div class="t" style="left:438.28px;top:302.38px;font:400 11.8px/11.8px 'Liberation Mono',monospace;color:#dcdcaa;transform:scaleX(0.9514);transform-origin:0 0;-webkit-text-stroke:0.08px currentColor;">elm_win_wm_rotation_available_rotations_set</div>
<div class="t" style="left:727.88px;top:302.38px;font:400 11.8px/11.8px 'Liberation Mono',monospace;color:#d4d4d4;transform:scaleX(0.9514);transform-origin:0 0;-webkit-text-stroke:0.08px currentColor;">(</div>
<div class="t" style="left:734.62px;top:302.38px;font:400 11.8px/11.8px 'Liberation Mono',monospace;color:#9cdcfe;transform:scaleX(0.9514);transform-origin:0 0;-webkit-text-stroke:0.08px currentColor;">ad</div>
<div class="t" style="left:748.09px;top:302.38px;font:400 11.8px/11.8px 'Liberation Mono',monospace;color:#d4d4d4;transform:scaleX(0.9514);transform-origin:0 0;-webkit-text-stroke:0.08px currentColor;">-></div>
<div class="t" style="left:761.56px;top:302.38px;font:400 11.8px/11.8px 'Liberation Mono',monospace;color:#9cdcfe;transform:scaleX(0.9514);transform-origin:0 0;-webkit-text-stroke:0.08px currentColor;">win</div>
<div class="t" style="left:781.77px;top:302.38px;font:400 11.8px/11.8px 'Liberation Mono',monospace;color:#d4d4d4;transform:scaleX(0.9514);transform-origin:0 0;-webkit-text-stroke:0.08px currentColor;">, (</div>
<div class="t" style="left:801.97px;top:302.38px;font:400 11.8px/11.8px 'Liberation Mono',monospace;color:#569cd6;transform:scaleX(0.9514);transform-origin:0 0;-webkit-text-stroke:0.08px currentColor;">const</div>
<div class="t" style="left:842.38px;top:302.38px;font:400 11.8px/11.8px 'Liberation Mono',monospace;color:#569cd6;transform:scaleX(0.9514);transform-origin:0 0;-webkit-text-stroke:0.08px currentColor;">int</div>
<div class="t" style="left:862.59px;top:302.38px;font:400 11.8px/11.8px 'Liberation Mono',monospace;color:#d4d4d4;transform:scaleX(0.9514);transform-origin:0 0;-webkit-text-stroke:0.08px currentColor;"> *)(&amp;</div>
<div class="t" style="left:896.26px;top:302.38px;font:400 11.8px/11.8px 'Liberation Mono',monospace;color:#9cdcfe;transform:scaleX(0.9514);transform-origin:0 0;-webkit-text-stroke:0.08px currentColor;">rots</div>
<div class="t" style="left:923.20px;top:302.38px;font:400 11.8px/11.8px 'Liberation Mono',monospace;color:#d4d4d4;transform:scaleX(0.9514);transform-origin:0 0;-webkit-text-stroke:0.08px currentColor;">), </div>
<div class="t" style="left:943.41px;top:302.38px;font:400 11.8px/11.8px 'Liberation Mono',monospace;color:#b5cea8;transform:scaleX(0.9514);transform-origin:0 0;-webkit-text-stroke:0.08px currentColor;">4</div>
<div class="t" style="left:950.14px;top:302.38px;font:400 11.8px/11.8px 'Liberation Mono',monospace;color:#d4d4d4;transform:scaleX(0.9514);transform-origin:0 0;-webkit-text-stroke:0.08px currentColor;">);</div>
<div class="t" style="left:347.73px;top:319.01px;font:400 11.8px/11.8px 'Liberation Mono',monospace;color:#858585;transform:scaleX(0.9514);transform-origin:0 0;-webkit-text-stroke:0.08px currentColor;">35</div>
<div class="t" style="left:384.40px;top:319.01px;font:400 11.8px/11.8px 'Liberation Mono',monospace;color:#d4d4d4;transform:scaleX(0.9514);transform-origin:0 0;-webkit-text-stroke:0.08px currentColor;">    }</div>
<div class="t" style="left:347.73px;top:335.63px;font:400 11.8px/11.8px 'Liberation Mono',monospace;color:#858585;transform:scaleX(0.9514);transform-origin:0 0;-webkit-text-stroke:0.08px currentColor;">36</div>
<div class="t" style="left:347.73px;top:352.26px;font:400 11.8px/11.8px 'Liberation Mono',monospace;color:#858585;transform:scaleX(0.9514);transform-origin:0 0;-webkit-text-stroke:0.08px currentColor;">37</div>
<div class="t" style="left:411.34px;top:352.26px;font:400 11.8px/11.8px 'Liberation Mono',monospace;color:#dcdcaa;transform:scaleX(0.9514);transform-origin:0 0;-webkit-text-stroke:0.08px currentColor;">evas_object_smart_callback_add</div>
<div class="t" style="left:613.39px;top:352.26px;font:400 11.8px/11.8px 'Liberation Mono',monospace;color:#d4d4d4;transform:scaleX(0.9514);transform-origin:0 0;-webkit-text-stroke:0.08px currentColor;">(</div>
<div class="t" style="left:620.12px;top:352.26px;font:400 11.8px/11.8px 'Liberation Mono',monospace;color:#9cdcfe;transform:scaleX(0.9514);transform-origin:0 0;-webkit-text-stroke:0.08px currentColor;">ad</div>
<div class="t" style="left:633.60px;top:352.26px;font:400 11.8px/11.8px 'Liberation Mono',monospace;color:#d4d4d4;transform:scaleX(0.9514);transform-origin:0 0;-webkit-text-stroke:0.08px currentColor;">-></div>
<div class="t" style="left:647.07px;top:352.26px;font:400 11.8px/11.8px 'Liberation Mono',monospace;color:#9cdcfe;transform:scaleX(0.9514);transform-origin:0 0;-webkit-text-stroke:0.08px currentColor;">win</div>
<div class="t" style="left:667.27px;top:352.26px;font:400 11.8px/11.8px 'Liberation Mono',monospace;color:#d4d4d4;transform:scaleX(0.9514);transform-origin:0 0;-webkit-text-stroke:0.08px currentColor;">, </div>
<div class="t" style="left:680.74px;top:352.26px;font:400 11.8px/11.8px 'Liberation Mono',monospace;color:#ce9178;transform:scaleX(0.9514);transform-origin:0 0;-webkit-text-stroke:0.08px currentColor;">"delete,request"</div>
<div class="t" style="left:788.50px;top:352.26px;font:400 11.8px/11.8px 'Liberation Mono',monospace;color:#d4d4d4;transform:scaleX(0.9514);transform-origin:0 0;-webkit-text-stroke:0.08px currentColor;">, win_delete_request_cb, </div>
<div class="t" style="left:956.88px;top:352.26px;font:400 11.8px/11.8px 'Liberation Mono',monospace;color:#569cd6;transform:scaleX(0.9514);transform-origin:0 0;-webkit-text-stroke:0.08px currentColor;">NULL</div>
<div class="t" style="left:983.82px;top:352.26px;font:400 11.8px/11.8px 'Liberation Mono',monospace;color:#d4d4d4;transform:scaleX(0.9514);transform-origin:0 0;-webkit-text-stroke:0.08px currentColor;">);</div>
<svg style="position:absolute;left:1253px;top:75.3px;overflow:hidden" width="78" height="250" viewBox="0 0 78 250"><g opacity="0.45"><rect x="0.00" y="0.00" width="5.44" height="1.0" fill="#c586c0"/><rect x="6.12" y="0.00" width="8.84" height="1.0" fill="#ce9178"/><rect x="0.00" y="2.86" width="4.76" height="1.0" fill="#569cd6"/><rect x="5.44" y="2.86" width="4.08" height="1.0" fill="#569cd6"/><rect x="10.20" y="2.86" width="4.76" height="1.0" fill="#d4d4d4"/><rect x="15.64" y="2.86" width="0.68" height="1.0" fill="#d4d4d4"/><rect x="2.72" y="4.29" width="7.48" height="1.0" fill="#d4d4d4"/><rect x="10.88" y="4.29" width="0.68" height="1.0" fill="#d4d4d4"/><rect x="11.56" y="4.29" width="2.04" height="1.0" fill="#9cdcfe"/><rect x="13.60" y="4.29" width="0.68" height="1.0" fill="#d4d4d4"/><rect x="2.72" y="5.72" width="7.48" height="1.0" fill="#d4d4d4"/><rect x="10.88" y="5.72" width="0.68" height="1.0" fill="#d4d4d4"/><rect x="11.56" y="5.72" width="4.76" height="1.0" fill="#9cdcfe"/><rect x="16.32" y="5.72" width="0.68" height="1.0" fill="#d4d4d4"/><rect x="2.72" y="7.15" width="7.48" height="1.0" fill="#d4d4d4"/><rect x="10.88" y="7.15" width="0.68" height="1.0" fill="#d4d4d4"/><rect x="11.56" y="7.15" width="3.40" height="1.0" fill="#9cdcfe"/><rect x="14.96" y="7.15" width="0.68" height="1.0" fill="#d4d4d4"/><rect x="0.00" y="8.58" width="0.68" height="1.0" fill="#d4d4d4"/><rect x="1.36" y="8.58" width="6.12" height="1.0" fill="#d4d4d4"/><rect x="7.48" y="8.58" width="0.68" height="1.0" fill="#d4d4d4"/><rect x="0.00" y="11.44" width="4.08" height="1.0" fill="#569cd6"/><rect x="4.76" y="11.44" width="2.72" height="1.0" fill="#569cd6"/><rect x="0.00" y="12.87" width="14.28" height="1.0" fill="#dcdcaa"/><rect x="14.28" y="12.87" width="0.68" height="1.0" fill="#d4d4d4"/><rect x="14.96" y="12.87" width="2.72" height="1.0" fill="#569cd6"/><rect x="18.36" y="12.87" width="0.68" height="1.0" fill="#d4d4d4"/><rect x="19.04" y="12.87" width="2.72" height="1.0" fill="#9cdcfe"/><rect x="21.76" y="12.87" width="0.68" height="1.0" fill="#d4d4d4"/><rect x="23.12" y="12.87" width="7.48" height="1.0" fill="#d4d4d4"/><rect x="31.28" y="12.87" width="0.68" height="1.0" fill="#d4d4d4"/><rect x="31.96" y="12.87" width="2.04" height="1.0" fill="#9cdcfe"/><rect x="34.00" y="12.87" width="0.68" height="1.0" fill="#d4d4d4"/><rect x="35.36" y="12.87" width="2.72" height="1.0" fill="#569cd6"/><rect x="38.76" y="12.87" width="0.68" height="1.0" fill="#d4d4d4"/><rect x="39.44" y="12.87" width="6.80" height="1.0" fill="#9cdcfe"/><rect x="46.24" y="12.87" width="0.68" height="1.0" fill="#d4d4d4"/><rect x="0.00" y="14.30" width="0.68" height="1.0" fill="#d4d4d4"/><rect x="2.72" y="15.73" width="7.48" height="1.0" fill="#dcdcaa"/><rect x="10.20" y="15.73" width="0.68" height="1.0" fill="#d4d4d4"/><rect x="10.88" y="15.73" width="0.68" height="1.0" fill="#d4d4d4"/><rect x="11.56" y="15.73" width="0.68" height="1.0" fill="#d4d4d4"/><rect x="0.00" y="17.16" width="0.68" height="1.0" fill="#d4d4d4"/><rect x="0.00" y="20.02" width="4.08" height="1.0" fill="#569cd6"/><rect x="4.76" y="20.02" width="2.72" height="1.0" fill="#569cd6"/><rect x="0.00" y="21.45" width="7.48" height="1.0" fill="#dcdcaa"/><rect x="7.48" y="21.45" width="0.68" height="1.0" fill="#d4d4d4"/><rect x="8.16" y="21.45" width="2.72" height="1.0" fill="#569cd6"/><rect x="11.56" y="21.45" width="0.68" height="1.0" fill="#d4d4d4"/><rect x="12.24" y="21.45" width="2.72" height="1.0" fill="#9cdcfe"/><rect x="14.96" y="21.45" width="0.68" height="1.0" fill="#d4d4d4"/><rect x="16.32" y="21.45" width="7.48" height="1.0" fill="#d4d4d4"/><rect x="24.48" y="21.45" width="0.68" height="1.0" fill="#d4d4d4"/><rect x="25.16" y="21.45" width="2.04" height="1.0" fill="#9cdcfe"/><rect x="27.20" y="21.45" width="0.68" height="1.0" fill="#d4d4d4"/><rect x="28.56" y="21.45" width="2.72" height="1.0" fill="#569cd6"/><rect x="31.96" y="21.45" width="0.68" height="1.0" fill="#d4d4d4"/><rect x="32.64" y="21.45" width="6.80" height="1.0" fill="#9cdcfe"/><rect x="39.44" y="21.45" width="0.68" height="1.0" fill="#d4d4d4"/><rect x="0.00" y="22.88" width="0.68" height="1.0" fill="#d4d4d4"/><rect x="2.72" y="24.31" width="6.12" height="1.0" fill="#d4d4d4"/><rect x="9.52" y="24.31" width="0.68" height="1.0" fill="#d4d4d4"/><rect x="10.20" y="24.31" width="1.36" height="1.0" fill="#9cdcfe"/><rect x="12.24" y="24.31" width="0.68" height="1.0" fill="#d4d4d4"/><rect x="13.60" y="24.31" width="2.72" height="1.0" fill="#9cdcfe"/><rect x="16.32" y="24.31" width="0.68" height="1.0" fill="#d4d4d4"/><rect x="2.72" y="25.74" width="1.36" height="1.0" fill="#6a9955"/><rect x="4.76" y="25.74" width="2.04" height="1.0" fill="#6a9955"/><rect x="7.48" y="25.74" width="4.08" height="1.0" fill="#6a9955"/><rect x="12.24" y="25.74" width="1.36" height="1.0" fill="#6a9955"/><rect x="14.28" y="25.74" width="1.36" height="1.0" fill="#6a9955"/><rect x="16.32" y="25.74" width="2.72" height="1.0" fill="#6a9955"/><rect x="19.72" y="25.74" width="4.08" height="1.0" fill="#6a9955"/><rect x="24.48" y="25.74" width="1.36" height="1.0" fill="#6a9955"/><rect x="2.72" y="27.17" width="8.84" height="1.0" fill="#dcdcaa"/><rect x="11.56" y="27.17" width="0.68" height="1.0" fill="#d4d4d4"/><rect x="12.24" y="27.17" width="1.36" height="1.0" fill="#9cdcfe"/><rect x="13.60" y="27.17" width="0.68" height="1.0" fill="#d4d4d4"/><rect x="14.28" y="27.17" width="0.68" height="1.0" fill="#d4d4d4"/><rect x="14.96" y="27.17" width="2.04" height="1.0" fill="#9cdcfe"/><rect x="17.00" y="27.17" width="0.68" height="1.0" fill="#d4d4d4"/><rect x="17.68" y="27.17" width="0.68" height="1.0" fill="#d4d4d4"/><rect x="0.00" y="28.60" width="0.68" height="1.0" fill="#d4d4d4"/><rect x="0.00" y="31.46" width="4.08" height="1.0" fill="#569cd6"/><rect x="4.76" y="31.46" width="2.72" height="1.0" fill="#569cd6"/><rect x="0.00" y="32.89" width="10.20" height="1.0" fill="#dcdcaa"/><rect x="10.20" y="32.89" width="0.68" height="1.0" fill="#d4d4d4"/><rect x="10.88" y="32.89" width="6.12" height="1.0" fill="#d4d4d4"/><rect x="17.68" y="32.89" width="0.68" height="1.0" fill="#d4d4d4"/><rect x="18.36" y="32.89" width="1.36" height="1.0" fill="#9cdcfe"/><rect x="19.72" y="32.89" width="0.68" height="1.0" fill="#d4d4d4"/><rect x="0.00" y="34.32" width="0.68" height="1.0" fill="#d4d4d4"/><rect x="2.72" y="35.75" width="1.36" height="1.0" fill="#6a9955"/><rect x="4.76" y="35.75" width="4.08" height="1.0" fill="#6a9955"/><rect x="9.52" y="35.75" width="1.36" height="1.0" fill="#6a9955"/><rect x="2.72" y="37.18" width="1.36" height="1.0" fill="#6a9955"/><rect x="4.76" y="37.18" width="4.08" height="1.0" fill="#6a9955"/><rect x="9.52" y="37.18" width="2.04" height="1.0" fill="#6a9955"/><rect x="12.24" y="37.18" width="6.80" height="1.0" fill="#6a9955"/><rect x="19.72" y="37.18" width="5.44" height="1.0" fill="#6a9955"/><rect x="4.76" y="38.61" width="4.76" height="1.0" fill="#6a9955"/><rect x="10.20" y="38.61" width="1.36" height="1.0" fill="#6a9955"/><rect x="12.24" y="38.61" width="6.12" height="1.0" fill="#6a9955"/><rect x="19.04" y="38.61" width="1.36" height="1.0" fill="#6a9955"/><rect x="21.08" y="38.61" width="6.80" height="1.0" fill="#6a9955"/><rect x="28.56" y="38.61" width="4.76" height="1.0" fill="#6a9955"/><rect x="34.00" y="38.61" width="1.36" height="1.0" fill="#6a9955"/><rect x="2.72" y="40.04" width="1.36" height="1.0" fill="#9cdcfe"/><rect x="4.08" y="40.04" width="0.68" height="1.0" fill="#d4d4d4"/><rect x="4.76" y="40.04" width="0.68" height="1.0" fill="#d4d4d4"/><rect x="5.44" y="40.04" width="2.04" height="1.0" fill="#9cdcfe"/><rect x="8.16" y="40.04" width="0.68" height="1.0" fill="#d4d4d4"/><rect x="9.52" y="40.04" width="17.00" height="1.0" fill="#dcdcaa"/><rect x="26.52" y="40.04" width="0.68" height="1.0" fill="#d4d4d4"/><rect x="27.20" y="40.04" width="4.76" height="1.0" fill="#d4d4d4"/><rect x="31.96" y="40.04" width="0.68" height="1.0" fill="#d4d4d4"/><rect x="33.32" y="40.04" width="4.76" height="1.0" fill="#d4d4d4"/><rect x="38.08" y="40.04" width="0.68" height="1.0" fill="#d4d4d4"/><rect x="38.76" y="40.04" width="0.68" height="1.0" fill="#d4d4d4"/><rect x="2.72" y="41.47" width="12.92" height="1.0" fill="#dcdcaa"/><rect x="15.64" y="41.47" width="0.68" height="1.0" fill="#d4d4d4"/><rect x="16.32" y="41.47" width="1.36" height="1.0" fill="#9cdcfe"/><rect x="17.68" y="41.47" width="0.68" height="1.0" fill="#d4d4d4"/><rect x="18.36" y="41.47" width="0.68" height="1.0" fill="#d4d4d4"/><rect x="19.04" y="41.47" width="2.04" height="1.0" fill="#9cdcfe"/><rect x="21.08" y="41.47" width="0.68" height="1.0" fill="#d4d4d4"/><rect x="22.44" y="41.47" width="6.12" height="1.0" fill="#d4d4d4"/><rect x="28.56" y="41.47" width="0.68" height="1.0" fill="#d4d4d4"/><rect x="29.24" y="41.47" width="0.68" height="1.0" fill="#d4d4d4"/><rect x="2.72" y="44.33" width="1.36" height="1.0" fill="#c586c0"/><rect x="4.76" y="44.33" width="0.68" height="1.0" fill="#d4d4d4"/><rect x="5.44" y="44.33" width="22.44" height="1.0" fill="#dcdcaa"/><rect x="27.88" y="44.33" width="0.68" height="1.0" fill="#d4d4d4"/><rect x="28.56" y="44.33" width="1.36" height="1.0" fill="#9cdcfe"/><rect x="29.92" y="44.33" width="0.68" height="1.0" fill="#d4d4d4"/><rect x="30.60" y="44.33" width="0.68" height="1.0" fill="#d4d4d4"/><rect x="31.28" y="44.33" width="2.04" height="1.0" fill="#9cdcfe"/><rect x="33.32" y="44.33" width="0.68" height="1.0" fill="#d4d4d4"/><rect x="34.00" y="44.33" width="0.68" height="1.0" fill="#d4d4d4"/><rect x="35.36" y="44.33" width="0.68" height="1.0" fill="#d4d4d4"/><rect x="5.44" y="45.76" width="2.04" height="1.0" fill="#569cd6"/><rect x="8.16" y="45.76" width="2.72" height="1.0" fill="#9cdcfe"/><rect x="10.88" y="45.76" width="0.68" height="1.0" fill="#d4d4d4"/><rect x="11.56" y="45.76" width="0.68" height="1.0" fill="#b5cea8"/><rect x="12.24" y="45.76" width="0.68" height="1.0" fill="#d4d4d4"/><rect x="13.60" y="45.76" width="0.68" height="1.0" fill="#d4d4d4"/><rect x="14.96" y="45.76" width="0.68" height="1.0" fill="#d4d4d4"/><rect x="16.32" y="45.76" width="0.68" height="1.0" fill="#b5cea8"/><rect x="17.00" y="45.76" width="0.68" height="1.0" fill="#d4d4d4"/><rect x="18.36" y="45.76" width="1.36" height="1.0" fill="#b5cea8"/><rect x="19.72" y="45.76" width="0.68" height="1.0" fill="#d4d4d4"/><rect x="21.08" y="45.76" width="2.04" height="1.0" fill="#b5cea8"/><rect x="23.12" y="45.76" width="0.68" height="1.0" fill="#d4d4d4"/><rect x="24.48" y="45.76" width="2.04" height="1.0" fill="#b5cea8"/><rect x="27.20" y="45.76" width="0.68" height="1.0" fill="#d4d4d4"/><rect x="27.88" y="45.76" width="0.68" height="1.0" fill="#d4d4d4"/><rect x="5.44" y="47.19" width="29.24" height="1.0" fill="#dcdcaa"/><rect x="34.68" y="47.19" width="0.68" height="1.0" fill="#d4d4d4"/><rect x="35.36" y="47.19" width="1.36" height="1.0" fill="#9cdcfe"/><rect x="36.72" y="47.19" width="0.68" height="1.0" fill="#d4d4d4"/><rect x="37.40" y="47.19" width="0.68" height="1.0" fill="#d4d4d4"/><rect x="38.08" y="47.19" width="2.04" height="1.0" fill="#9cdcfe"/><rect x="40.12" y="47.19" width="0.68" height="1.0" fill="#d4d4d4"/><rect x="41.48" y="47.19" width="0.68" height="1.0" fill="#d4d4d4"/><rect x="42.16" y="47.19" width="3.40" height="1.0" fill="#569cd6"/><rect x="46.24" y="47.19" width="2.04" height="1.0" fill="#569cd6"/><rect x="48.96" y="47.19" width="0.68" height="1.0" fill="#d4d4d4"/><rect x="49.64" y="47.19" width="0.68" height="1.0" fill="#d4d4d4"/><rect x="50.32" y="47.19" width="0.68" height="1.0" fill="#d4d4d4"/><rect x="51.00" y="47.19" width="0.68" height="1.0" fill="#d4d4d4"/><rect x="51.68" y="47.19" width="2.72" height="1.0" fill="#9cdcfe"/><rect x="54.40" y="47.19" width="0.68" height="1.0" fill="#d4d4d4"/><rect x="55.08" y="47.19" width="0.68" height="1.0" fill="#d4d4d4"/><rect x="56.44" y="47.19" width="0.68" height="1.0" fill="#b5cea8"/><rect x="57.12" y="47.19" width="0.68" height="1.0" fill="#d4d4d4"/><rect x="57.80" y="47.19" width="0.68" height="1.0" fill="#d4d4d4"/><rect x="2.72" y="48.62" width="0.68" height="1.0" fill="#d4d4d4"/><rect x="2.72" y="51.48" width="20.40" height="1.0" fill="#dcdcaa"/><rect x="23.12" y="51.48" width="0.68" height="1.0" fill="#d4d4d4"/><rect x="23.80" y="51.48" width="1.36" height="1.0" fill="#9cdcfe"/><rect x="25.16" y="51.48" width="0.68" height="1.0" fill="#d4d4d4"/><rect x="25.84" y="51.48" width="0.68" height="1.0" fill="#d4d4d4"/><rect x="26.52" y="51.48" width="2.04" height="1.0" fill="#9cdcfe"/><rect x="28.56" y="51.48" width="0.68" height="1.0" fill="#d4d4d4"/><rect x="29.92" y="51.48" width="10.88" height="1.0" fill="#ce9178"/><rect x="40.80" y="51.48" width="0.68" height="1.0" fill="#d4d4d4"/><rect x="42.16" y="51.48" width="14.28" height="1.0" fill="#d4d4d4"/><rect x="56.44" y="51.48" width="0.68" height="1.0" fill="#d4d4d4"/><rect x="57.80" y="51.48" width="2.72" height="1.0" fill="#569cd6"/><rect x="60.52" y="51.48" width="0.68" height="1.0" fill="#d4d4d4"/><rect x="61.20" y="51.48" width="0.68" height="1.0" fill="#d4d4d4"/><rect x="2.72" y="52.91" width="20.40" height="1.0" fill="#dcdcaa"/><rect x="23.12" y="52.91" width="0.68" height="1.0" fill="#d4d4d4"/><rect x="23.80" y="52.91" width="1.36" height="1.0" fill="#9cdcfe"/><rect x="25.16" y="52.91" width="0.68" height="1.0" fill="#d4d4d4"/><rect x="25.84" y="52.91" width="0.68" height="1.0" fill="#d4d4d4"/><rect x="26.52" y="52.91" width="2.04" height="1.0" fill="#9cdcfe"/><rect x="28.56" y="52.91" width="0.68" height="1.0" fill="#d4d4d4"/><rect x="29.92" y="52.91" width="12.24" height="1.0" fill="#d4d4d4"/><rect x="42.16" y="52.91" width="0.68" height="1.0" fill="#d4d4d4"/><rect x="43.52" y="52.91" width="7.48" height="1.0" fill="#d4d4d4"/><rect x="51.00" y="52.91" width="0.68" height="1.0" fill="#d4d4d4"/><rect x="52.36" y="52.91" width="1.36" height="1.0" fill="#9cdcfe"/><rect x="53.72" y="52.91" width="0.68" height="1.0" fill="#d4d4d4"/><rect x="54.40" y="52.91" width="0.68" height="1.0" fill="#d4d4d4"/><rect x="2.72" y="55.77" width="1.36" height="1.0" fill="#6a9955"/><rect x="4.76" y="55.77" width="6.80" height="1.0" fill="#6a9955"/><rect x="12.24" y="55.77" width="1.36" height="1.0" fill="#6a9955"/><rect x="2.72" y="57.20" width="1.36" height="1.0" fill="#6a9955"/><rect x="4.76" y="57.20" width="4.08" height="1.0" fill="#6a9955"/><rect x="9.52" y="57.20" width="2.04" height="1.0" fill="#6a9955"/><rect x="12.24" y="57.20" width="6.80" height="1.0" fill="#6a9955"/><rect x="19.72" y="57.20" width="10.20" height="1.0" fill="#6a9955"/><rect x="4.76" y="58.63" width="9.52" height="1.0" fill="#6a9955"/><rect x="14.96" y="58.63" width="1.36" height="1.0" fill="#6a9955"/><rect x="17.00" y="58.63" width="6.12" height="1.0" fill="#6a9955"/><rect x="23.80" y="58.63" width="2.04" height="1.0" fill="#6a9955"/><rect x="26.52" y="58.63" width="2.72" height="1.0" fill="#6a9955"/><rect x="29.92" y="58.63" width="2.04" height="1.0" fill="#6a9955"/><rect x="32.64" y="58.63" width="1.36" height="1.0" fill="#6a9955"/><rect x="34.68" y="58.63" width="2.72" height="1.0" fill="#6a9955"/><rect x="38.08" y="58.63" width="4.08" height="1.0" fill="#6a9955"/><rect x="42.84" y="58.63" width="2.72" height="1.0" fill="#6a9955"/><rect x="4.76" y="60.06" width="2.72" height="1.0" fill="#6a9955"/><rect x="8.16" y="60.06" width="6.12" height="1.0" fill="#6a9955"/><rect x="14.96" y="60.06" width="1.36" height="1.0" fill="#6a9955"/><rect x="17.00" y="60.06" width="4.76" height="1.0" fill="#6a9955"/><rect x="22.44" y="60.06" width="4.08" height="1.0" fill="#6a9955"/><rect x="27.20" y="60.06" width="1.36" height="1.0" fill="#6a9955"/><rect x="29.24" y="60.06" width="5.44" height="1.0" fill="#6a9955"/><rect x="35.36" y="60.06" width="1.36" height="1.0" fill="#6a9955"/><rect x="2.72" y="61.49" width="1.36" height="1.0" fill="#9cdcfe"/><rect x="4.08" y="61.49" width="0.68" height="1.0" fill="#d4d4d4"/><rect x="4.76" y="61.49" width="0.68" height="1.0" fill="#d4d4d4"/><rect x="5.44" y="61.49" width="4.76" height="1.0" fill="#9cdcfe"/><rect x="10.88" y="61.49" width="0.68" height="1.0" fill="#d4d4d4"/><rect x="12.24" y="61.49" width="12.24" height="1.0" fill="#dcdcaa"/><rect x="24.48" y="61.49" width="0.68" height="1.0" fill="#d4d4d4"/><rect x="25.16" y="61.49" width="1.36" height="1.0" fill="#9cdcfe"/><rect x="26.52" y="61.49" width="0.68" height="1.0" fill="#d4d4d4"/><rect x="27.20" y="61.49" width="0.68" height="1.0" fill="#d4d4d4"/><rect x="27.88" y="61.49" width="2.04" height="1.0" fill="#9cdcfe"/><rect x="29.92" y="61.49" width="0.68" height="1.0" fill="#d4d4d4"/><rect x="30.60" y="61.49" width="0.68" height="1.0" fill="#d4d4d4"/><rect x="2.72" y="62.92" width="17.68" height="1.0" fill="#dcdcaa"/><rect x="20.40" y="62.92" width="0.68" height="1.0" fill="#d4d4d4"/><rect x="21.08" y="62.92" width="1.36" height="1.0" fill="#9cdcfe"/><rect x="22.44" y="62.92" width="0.68" height="1.0" fill="#d4d4d4"/><rect x="23.12" y="62.92" width="0.68" height="1.0" fill="#d4d4d4"/><rect x="23.80" y="62.92" width="2.04" height="1.0" fill="#9cdcfe"/><rect x="25.84" y="62.92" width="0.68" height="1.0" fill="#d4d4d4"/><rect x="27.20" y="62.92" width="14.96" height="1.0" fill="#d4d4d4"/><rect x="42.16" y="62.92" width="0.68" height="1.0" fill="#d4d4d4"/><rect x="42.84" y="62.92" width="0.68" height="1.0" fill="#d4d4d4"/><rect x="2.72" y="64.35" width="19.72" height="1.0" fill="#dcdcaa"/><rect x="22.44" y="64.35" width="0.68" height="1.0" fill="#d4d4d4"/><rect x="23.12" y="64.35" width="1.36" height="1.0" fill="#9cdcfe"/><rect x="24.48" y="64.35" width="0.68" height="1.0" fill="#d4d4d4"/><rect x="25.16" y="64.35" width="0.68" height="1.0" fill="#d4d4d4"/><rect x="25.84" y="64.35" width="2.04" height="1.0" fill="#9cdcfe"/><rect x="27.88" y="64.35" width="0.68" height="1.0" fill="#d4d4d4"/><rect x="29.24" y="64.35" width="16.32" height="1.0" fill="#d4d4d4"/><rect x="45.56" y="64.35" width="0.68" height="1.0" fill="#d4d4d4"/><rect x="46.24" y="64.35" width="0.68" height="1.0" fill="#d4d4d4"/><rect x="2.72" y="65.78" width="21.76" height="1.0" fill="#dcdcaa"/><rect x="24.48" y="65.78" width="0.68" height="1.0" fill="#d4d4d4"/><rect x="25.16" y="65.78" width="1.36" height="1.0" fill="#9cdcfe"/><rect x="26.52" y="65.78" width="0.68" height="1.0" fill="#d4d4d4"/><rect x="27.20" y="65.78" width="0.68" height="1.0" fill="#d4d4d4"/><rect x="27.88" y="65.78" width="4.76" height="1.0" fill="#9cdcfe"/><rect x="32.64" y="65.78" width="0.68" height="1.0" fill="#d4d4d4"/><rect x="34.00" y="65.78" width="10.88" height="1.0" fill="#d4d4d4"/><rect x="44.88" y="65.78" width="0.68" height="1.0" fill="#d4d4d4"/><rect x="46.24" y="65.78" width="10.88" height="1.0" fill="#d4d4d4"/><rect x="57.12" y="65.78" width="0.68" height="1.0" fill="#d4d4d4"/><rect x="57.80" y="65.78" width="0.68" height="1.0" fill="#d4d4d4"/><rect x="2.72" y="67.21" width="17.00" height="1.0" fill="#dcdcaa"/><rect x="19.72" y="67.21" width="0.68" height="1.0" fill="#d4d4d4"/><rect x="20.40" y="67.21" width="1.36" height="1.0" fill="#9cdcfe"/><rect x="21.76" y="67.21" width="0.68" height="1.0" fill="#d4d4d4"/><rect x="22.44" y="67.21" width="0.68" height="1.0" fill="#d4d4d4"/><rect x="23.12" y="67.21" width="2.04" height="1.0" fill="#9cdcfe"/><rect x="25.16" y="67.21" width="0.68" height="1.0" fill="#d4d4d4"/><rect x="26.52" y="67.21" width="1.36" height="1.0" fill="#9cdcfe"/><rect x="27.88" y="67.21" width="0.68" height="1.0" fill="#d4d4d4"/><rect x="28.56" y="67.21" width="0.68" height="1.0" fill="#d4d4d4"/><rect x="29.24" y="67.21" width="4.76" height="1.0" fill="#9cdcfe"/><rect x="34.00" y="67.21" width="0.68" height="1.0" fill="#d4d4d4"/><rect x="34.68" y="67.21" width="0.68" height="1.0" fill="#d4d4d4"/><rect x="2.72" y="68.64" width="10.88" height="1.0" fill="#dcdcaa"/><rect x="13.60" y="68.64" width="0.68" height="1.0" fill="#d4d4d4"/><rect x="14.28" y="68.64" width="1.36" height="1.0" fill="#9cdcfe"/><rect x="15.64" y="68.64" width="0.68" height="1.0" fill="#d4d4d4"/><rect x="16.32" y="68.64" width="0.68" height="1.0" fill="#d4d4d4"/><rect x="17.00" y="68.64" width="4.76" height="1.0" fill="#9cdcfe"/><rect x="21.76" y="68.64" width="0.68" height="1.0" fill="#d4d4d4"/><rect x="22.44" y="68.64" width="0.68" height="1.0" fill="#d4d4d4"/><rect x="2.72" y="71.50" width="1.36" height="1.0" fill="#6a9955"/><rect x="4.76" y="71.50" width="3.40" height="1.0" fill="#6a9955"/><rect x="8.84" y="71.50" width="1.36" height="1.0" fill="#6a9955"/><rect x="2.72" y="72.93" width="1.36" height="1.0" fill="#6a9955"/><rect x="4.76" y="72.93" width="4.08" height="1.0" fill="#6a9955"/><rect x="9.52" y="72.93" width="1.36" height="1.0" fill="#6a9955"/><rect x="11.56" y="72.93" width="4.08" height="1.0" fill="#6a9955"/><rect x="16.32" y="72.93" width="2.72" height="1.0" fill="#6a9955"/><rect x="19.72" y="72.93" width="1.36" height="1.0" fill="#6a9955"/><rect x="21.76" y="72.93" width="2.04" height="1.0" fill="#6a9955"/><rect x="24.48" y="72.93" width="2.72" height="1.0" fill="#6a9955"/><rect x="27.88" y="72.93" width="2.72" height="1.0" fill="#6a9955"/><rect x="4.76" y="74.36" width="4.08" height="1.0" fill="#6a9955"/><rect x="9.52" y="74.36" width="2.72" height="1.0" fill="#6a9955"/><rect x="12.92" y="74.36" width="2.72" height="1.0" fill="#6a9955"/><rect x="16.32" y="74.36" width="1.36" height="1.0" fill="#6a9955"/><rect x="18.36" y="74.36" width="4.08" height="1.0" fill="#6a9955"/><rect x="23.12" y="74.36" width="2.04" height="1.0" fill="#6a9955"/><rect x="25.84" y="74.36" width="3.40" height="1.0" fill="#6a9955"/><rect x="29.92" y="74.36" width="1.36" height="1.0" fill="#6a9955"/><rect x="2.72" y="75.79" width="1.36" height="1.0" fill="#9cdcfe"/><rect x="4.08" y="75.79" width="0.68" height="1.0" fill="#d4d4d4"/><rect x="4.76" y="75.79" width="0.68" height="1.0" fill="#d4d4d4"/><rect x="5.44" y="75.79" width="3.40" height="1.0" fill="#9cdcfe"/><rect x="9.52" y="75.79" width="0.68" height="1.0" fill="#d4d4d4"/><rect x="10.88" y="75.79" width="8.84" height="1.0" fill="#dcdcaa"/><rect x="19.72" y="75.79" width="0.68" height="1.0" fill="#d4d4d4"/><rect x="20.40" y="75.79" width="1.36" height="1.0" fill="#9cdcfe"/><rect x="21.76" y="75.79" width="0.68" height="1.0" fill="#d4d4d4"/><rect x="22.44" y="75.79" width="0.68" height="1.0" fill="#d4d4d4"/><rect x="23.12" y="75.79" width="4.76" height="1.0" fill="#9cdcfe"/><rect x="27.88" y="75.79" width="0.68" height="1.0" fill="#d4d4d4"/><rect x="28.56" y="75.79" width="0.68" height="1.0" fill="#d4d4d4"/><rect x="2.72" y="77.22" width="12.92" height="1.0" fill="#dcdcaa"/><rect x="15.64" y="77.22" width="0.68" height="1.0" fill="#d4d4d4"/><rect x="16.32" y="77.22" width="1.36" height="1.0" fill="#9cdcfe"/><rect x="17.68" y="77.22" width="0.68" height="1.0" fill="#d4d4d4"/><rect x="18.36" y="77.22" width="0.68" height="1.0" fill="#d4d4d4"/><rect x="19.04" y="77.22" width="3.40" height="1.0" fill="#9cdcfe"/><rect x="22.44" y="77.22" width="0.68" height="1.0" fill="#d4d4d4"/><rect x="23.80" y="77.22" width="13.60" height="1.0" fill="#ce9178"/><rect x="38.08" y="77.22" width="9.52" height="1.0" fill="#ce9178"/><rect x="47.60" y="77.22" width="0.68" height="1.0" fill="#d4d4d4"/><rect x="48.28" y="77.22" width="0.68" height="1.0" fill="#d4d4d4"/><rect x="2.72" y="78.65" width="21.76" height="1.0" fill="#dcdcaa"/><rect x="24.48" y="78.65" width="0.68" height="1.0" fill="#d4d4d4"/><rect x="25.16" y="78.65" width="1.36" height="1.0" fill="#9cdcfe"/><rect x="26.52" y="78.65" width="0.68" height="1.0" fill="#d4d4d4"/><rect x="27.20" y="78.65" width="0.68" height="1.0" fill="#d4d4d4"/><rect x="27.88" y="78.65" width="3.40" height="1.0" fill="#9cdcfe"/><rect x="31.28" y="78.65" width="0.68" height="1.0" fill="#d4d4d4"/><rect x="32.64" y="78.65" width="10.88" height="1.0" fill="#d4d4d4"/><rect x="43.52" y="78.65" width="0.68" height="1.0" fill="#d4d4d4"/><rect x="44.88" y="78.65" width="10.88" height="1.0" fill="#d4d4d4"/><rect x="55.76" y="78.65" width="0.68" height="1.0" fill="#d4d4d4"/><rect x="56.44" y="78.65" width="0.68" height="1.0" fill="#d4d4d4"/><rect x="2.72" y="80.08" width="14.96" height="1.0" fill="#dcdcaa"/><rect x="17.68" y="80.08" width="0.68" height="1.0" fill="#d4d4d4"/><rect x="18.36" y="80.08" width="1.36" height="1.0" fill="#9cdcfe"/><rect x="19.72" y="80.08" width="0.68" height="1.0" fill="#d4d4d4"/><rect x="20.40" y="80.08" width="0.68" height="1.0" fill="#d4d4d4"/><rect x="21.08" y="80.08" width="4.76" height="1.0" fill="#9cdcfe"/><rect x="25.84" y="80.08" width="0.68" height="1.0" fill="#d4d4d4"/><rect x="27.20" y="80.08" width="1.36" height="1.0" fill="#9cdcfe"/><rect x="28.56" y="80.08" width="0.68" height="1.0" fill="#d4d4d4"/><rect x="29.24" y="80.08" width="0.68" height="1.0" fill="#d4d4d4"/><rect x="29.92" y="80.08" width="3.40" height="1.0" fill="#9cdcfe"/><rect x="33.32" y="80.08" width="0.68" height="1.0" fill="#d4d4d4"/><rect x="34.00" y="80.08" width="0.68" height="1.0" fill="#d4d4d4"/><rect x="2.72" y="82.94" width="1.36" height="1.0" fill="#6a9955"/><rect x="4.76" y="82.94" width="2.72" height="1.0" fill="#6a9955"/><rect x="8.16" y="82.94" width="4.08" height="1.0" fill="#6a9955"/><rect x="12.92" y="82.94" width="3.40" height="1.0" fill="#6a9955"/><rect x="17.00" y="82.94" width="2.72" height="1.0" fill="#6a9955"/><rect x="20.40" y="82.94" width="2.04" height="1.0" fill="#6a9955"/><rect x="23.12" y="82.94" width="1.36" height="1.0" fill="#6a9955"/><rect x="25.16" y="82.94" width="2.04" height="1.0" fill="#6a9955"/><rect x="27.88" y="82.94" width="1.36" height="1.0" fill="#6a9955"/><rect x="29.92" y="82.94" width="1.36" height="1.0" fill="#6a9955"/><rect x="2.72" y="84.37" width="10.88" height="1.0" fill="#dcdcaa"/><rect x="13.60" y="84.37" width="0.68" height="1.0" fill="#d4d4d4"/><rect x="14.28" y="84.37" width="1.36" height="1.0" fill="#9cdcfe"/><rect x="15.64" y="84.37" width="0.68" height="1.0" fill="#d4d4d4"/><rect x="16.32" y="84.37" width="0.68" height="1.0" fill="#d4d4d4"/><rect x="17.00" y="84.37" width="2.04" height="1.0" fill="#9cdcfe"/><rect x="19.04" y="84.37" width="0.68" height="1.0" fill="#d4d4d4"/><rect x="19.72" y="84.37" width="0.68" height="1.0" fill="#d4d4d4"/><rect x="0.00" y="85.80" width="0.68" height="1.0" fill="#d4d4d4"/><rect x="0.00" y="88.66" width="4.08" height="1.0" fill="#569cd6"/><rect x="4.76" y="88.66" width="2.72" height="1.0" fill="#569cd6"/><rect x="0.00" y="90.09" width="6.80" height="1.0" fill="#dcdcaa"/><rect x="6.80" y="90.09" width="0.68" height="1.0" fill="#d4d4d4"/><rect x="7.48" y="90.09" width="2.72" height="1.0" fill="#569cd6"/><rect x="10.88" y="90.09" width="0.68" height="1.0" fill="#d4d4d4"/><rect x="11.56" y="90.09" width="2.72" height="1.0" fill="#9cdcfe"/><rect x="14.28" y="90.09" width="0.68" height="1.0" fill="#d4d4d4"/><rect x="0.00" y="91.52" width="0.68" height="1.0" fill="#d4d4d4"/><rect x="2.72" y="92.95" width="1.36" height="1.0" fill="#6a9955"/><rect x="4.76" y="92.95" width="2.72" height="1.0" fill="#6a9955"/><rect x="8.16" y="92.95" width="1.36" height="1.0" fill="#6a9955"/><rect x="10.20" y="92.95" width="2.72" height="1.0" fill="#6a9955"/><rect x="13.60" y="92.95" width="6.12" height="1.0" fill="#6a9955"/><rect x="20.40" y="92.95" width="4.76" height="1.0" fill="#6a9955"/><rect x="25.84" y="92.95" width="4.08" height="1.0" fill="#6a9955"/><rect x="30.60" y="92.95" width="2.72" height="1.0" fill="#6a9955"/><rect x="34.00" y="92.95" width="3.40" height="1.0" fill="#6a9955"/><rect x="38.08" y="92.95" width="2.72" height="1.0" fill="#6a9955"/><rect x="41.48" y="92.95" width="4.08" height="1.0" fill="#6a9955"/><rect x="5.44" y="94.38" width="6.80" height="1.0" fill="#6a9955"/><rect x="12.92" y="94.38" width="1.36" height="1.0" fill="#6a9955"/><rect x="14.96" y="94.38" width="6.12" height="1.0" fill="#6a9955"/><rect x="21.76" y="94.38" width="2.04" height="1.0" fill="#6a9955"/><rect x="24.48" y="94.38" width="8.84" height="1.0" fill="#6a9955"/><rect x="34.00" y="94.38" width="2.72" height="1.0" fill="#6a9955"/><rect x="5.44" y="95.81" width="1.36" height="1.0" fill="#6a9955"/><rect x="7.48" y="95.81" width="2.72" height="1.0" fill="#6a9955"/><rect x="10.88" y="95.81" width="5.44" height="1.0" fill="#6a9955"/><rect x="17.00" y="95.81" width="4.76" height="1.0" fill="#6a9955"/><rect x="22.44" y="95.81" width="3.40" height="1.0" fill="#6a9955"/><rect x="26.52" y="95.81" width="2.04" height="1.0" fill="#6a9955"/><rect x="29.24" y="95.81" width="2.72" height="1.0" fill="#6a9955"/><rect x="32.64" y="95.81" width="2.72" height="1.0" fill="#6a9955"/><rect x="36.04" y="95.81" width="1.36" height="1.0" fill="#6a9955"/><rect x="38.08" y="95.81" width="7.48" height="1.0" fill="#6a9955"/><rect x="46.24" y="95.81" width="4.08" height="1.0" fill="#6a9955"/><rect x="5.44" y="97.24" width="1.36" height="1.0" fill="#6a9955"/><rect x="7.48" y="97.24" width="2.72" height="1.0" fill="#6a9955"/><rect x="10.88" y="97.24" width="5.44" height="1.0" fill="#6a9955"/><rect x="17.00" y="97.24" width="4.76" height="1.0" fill="#6a9955"/><rect x="22.44" y="97.24" width="4.08" height="1.0" fill="#6a9955"/><rect x="27.20" y="97.24" width="2.04" height="1.0" fill="#6a9955"/><rect x="29.92" y="97.24" width="7.48" height="1.0" fill="#6a9955"/><rect x="38.08" y="97.24" width="1.36" height="1.0" fill="#6a9955"/><rect x="40.12" y="97.24" width="6.80" height="1.0" fill="#6a9955"/><rect x="47.60" y="97.24" width="1.36" height="1.0" fill="#6a9955"/><rect x="2.72" y="98.67" width="6.12" height="1.0" fill="#d4d4d4"/><rect x="9.52" y="98.67" width="0.68" height="1.0" fill="#d4d4d4"/><rect x="10.20" y="98.67" width="1.36" height="1.0" fill="#9cdcfe"/><rect x="12.24" y="98.67" width="0.68" height="1.0" fill="#d4d4d4"/><rect x="13.60" y="98.67" width="2.72" height="1.0" fill="#9cdcfe"/><rect x="16.32" y="98.67" width="0.68" height="1.0" fill="#d4d4d4"/><rect x="2.72" y="101.53" width="10.20" height="1.0" fill="#dcdcaa"/><rect x="12.92" y="101.53" width="0.68" height="1.0" fill="#d4d4d4"/><rect x="13.60" y="101.53" width="1.36" height="1.0" fill="#9cdcfe"/><rect x="14.96" y="101.53" width="0.68" height="1.0" fill="#d4d4d4"/><rect x="15.64" y="101.53" width="0.68" height="1.0" fill="#d4d4d4"/><rect x="2.72" y="104.39" width="4.08" height="1.0" fill="#c586c0"/><rect x="7.48" y="104.39" width="2.72" height="1.0" fill="#569cd6"/><rect x="10.20" y="104.39" width="0.68" height="1.0" fill="#d4d4d4"/><rect x="0.00" y="105.82" width="0.68" height="1.0" fill="#d4d4d4"/><rect x="0.00" y="108.68" width="4.08" height="1.0" fill="#569cd6"/><rect x="4.76" y="108.68" width="2.72" height="1.0" fill="#569cd6"/><rect x="0.00" y="110.11" width="7.48" height="1.0" fill="#dcdcaa"/><rect x="7.48" y="110.11" width="0.68" height="1.0" fill="#d4d4d4"/><rect x="8.16" y="110.11" width="8.84" height="1.0" fill="#d4d4d4"/><rect x="17.68" y="110.11" width="7.48" height="1.0" fill="#9cdcfe"/><rect x="25.16" y="110.11" width="0.68" height="1.0" fill="#d4d4d4"/><rect x="26.52" y="110.11" width="2.72" height="1.0" fill="#569cd6"/><rect x="29.92" y="110.11" width="0.68" height="1.0" fill="#d4d4d4"/><rect x="30.60" y="110.11" width="2.72" height="1.0" fill="#9cdcfe"/><rect x="33.32" y="110.11" width="0.68" height="1.0" fill="#d4d4d4"/><rect x="0.00" y="111.54" width="0.68" height="1.0" fill="#d4d4d4"/><rect x="2.72" y="112.97" width="1.36" height="1.0" fill="#6a9955"/><rect x="4.76" y="112.97" width="4.08" height="1.0" fill="#6a9955"/><rect x="9.52" y="112.97" width="2.04" height="1.0" fill="#6a9955"/><rect x="12.24" y="112.97" width="4.08" height="1.0" fill="#6a9955"/><rect x="17.00" y="112.97" width="5.44" height="1.0" fill="#6a9955"/><rect x="23.12" y="112.97" width="1.36" height="1.0" fill="#6a9955"/><rect x="0.00" y="114.40" width="0.68" height="1.0" fill="#d4d4d4"/><rect x="0.00" y="117.26" width="4.08" height="1.0" fill="#569cd6"/><rect x="4.76" y="117.26" width="2.72" height="1.0" fill="#569cd6"/><rect x="0.00" y="118.69" width="6.12" height="1.0" fill="#dcdcaa"/><rect x="6.12" y="118.69" width="0.68" height="1.0" fill="#d4d4d4"/><rect x="6.80" y="118.69" width="2.72" height="1.0" fill="#569cd6"/><rect x="10.20" y="118.69" width="0.68" height="1.0" fill="#d4d4d4"/><rect x="10.88" y="118.69" width="2.72" height="1.0" fill="#9cdcfe"/><rect x="13.60" y="118.69" width="0.68" height="1.0" fill="#d4d4d4"/><rect x="0.00" y="120.12" width="0.68" height="1.0" fill="#d4d4d4"/><rect x="2.72" y="121.55" width="1.36" height="1.0" fill="#6a9955"/><rect x="4.76" y="121.55" width="2.72" height="1.0" fill="#6a9955"/><rect x="8.16" y="121.55" width="6.12" height="1.0" fill="#6a9955"/><rect x="14.96" y="121.55" width="4.76" height="1.0" fill="#6a9955"/><rect x="20.40" y="121.55" width="2.72" height="1.0" fill="#6a9955"/><rect x="23.80" y="121.55" width="7.48" height="1.0" fill="#6a9955"/><rect x="31.96" y="121.55" width="4.76" height="1.0" fill="#6a9955"/><rect x="37.40" y="121.55" width="6.80" height="1.0" fill="#6a9955"/><rect x="44.88" y="121.55" width="1.36" height="1.0" fill="#6a9955"/><rect x="0.00" y="122.98" width="0.68" height="1.0" fill="#d4d4d4"/><rect x="0.00" y="125.84" width="4.08" height="1.0" fill="#569cd6"/><rect x="4.76" y="125.84" width="2.72" height="1.0" fill="#569cd6"/><rect x="0.00" y="127.27" width="6.80" height="1.0" fill="#dcdcaa"/><rect x="6.80" y="127.27" width="0.68" height="1.0" fill="#d4d4d4"/><rect x="7.48" y="127.27" width="2.72" height="1.0" fill="#569cd6"/><rect x="10.88" y="127.27" width="0.68" height="1.0" fill="#d4d4d4"/><rect x="11.56" y="127.27" width="2.72" height="1.0" fill="#9cdcfe"/><rect x="14.28" y="127.27" width="0.68" height="1.0" fill="#d4d4d4"/><rect x="0.00" y="128.70" width="0.68" height="1.0" fill="#d4d4d4"/><rect x="2.72" y="130.13" width="1.36" height="1.0" fill="#6a9955"/><rect x="4.76" y="130.13" width="2.72" height="1.0" fill="#6a9955"/><rect x="8.16" y="130.13" width="6.12" height="1.0" fill="#6a9955"/><rect x="14.96" y="130.13" width="4.76" height="1.0" fill="#6a9955"/><rect x="20.40" y="130.13" width="2.72" height="1.0" fill="#6a9955"/><rect x="23.80" y="130.13" width="7.48" height="1.0" fill="#6a9955"/><rect x="31.96" y="130.13" width="4.76" height="1.0" fill="#6a9955"/><rect x="37.40" y="130.13" width="5.44" height="1.0" fill="#6a9955"/><rect x="43.52" y="130.13" width="1.36" height="1.0" fill="#6a9955"/><rect x="0.00" y="131.56" width="0.68" height="1.0" fill="#d4d4d4"/><rect x="0.00" y="134.42" width="4.08" height="1.0" fill="#569cd6"/><rect x="4.76" y="134.42" width="2.72" height="1.0" fill="#569cd6"/><rect x="0.00" y="135.85" width="8.84" height="1.0" fill="#dcdcaa"/><rect x="8.84" y="135.85" width="0.68" height="1.0" fill="#d4d4d4"/><rect x="9.52" y="135.85" width="2.72" height="1.0" fill="#569cd6"/><rect x="12.92" y="135.85" width="0.68" height="1.0" fill="#d4d4d4"/><rect x="13.60" y="135.85" width="2.72" height="1.0" fill="#9cdcfe"/><rect x="16.32" y="135.85" width="0.68" height="1.0" fill="#d4d4d4"/><rect x="0.00" y="137.28" width="0.68" height="1.0" fill="#d4d4d4"/><rect x="2.72" y="138.71" width="1.36" height="1.0" fill="#6a9955"/><rect x="4.76" y="138.71" width="4.76" height="1.0" fill="#6a9955"/><rect x="10.20" y="138.71" width="2.04" height="1.0" fill="#6a9955"/><rect x="12.92" y="138.71" width="6.80" height="1.0" fill="#6a9955"/><rect x="20.40" y="138.71" width="1.36" height="1.0" fill="#6a9955"/><rect x="0.00" y="140.14" width="0.68" height="1.0" fill="#d4d4d4"/><rect x="0.00" y="143.00" width="4.08" height="1.0" fill="#569cd6"/><rect x="4.76" y="143.00" width="2.72" height="1.0" fill="#569cd6"/><rect x="0.00" y="144.43" width="12.92" height="1.0" fill="#dcdcaa"/><rect x="12.92" y="144.43" width="0.68" height="1.0" fill="#d4d4d4"/><rect x="13.60" y="144.43" width="10.88" height="1.0" fill="#d4d4d4"/><rect x="25.16" y="144.43" width="6.80" height="1.0" fill="#9cdcfe"/><rect x="31.96" y="144.43" width="0.68" height="1.0" fill="#d4d4d4"/><rect x="33.32" y="144.43" width="2.72" height="1.0" fill="#569cd6"/><rect x="36.72" y="144.43" width="0.68" height="1.0" fill="#d4d4d4"/><rect x="37.40" y="144.43" width="6.12" height="1.0" fill="#9cdcfe"/><rect x="43.52" y="144.43" width="0.68" height="1.0" fill="#d4d4d4"/><rect x="0.00" y="145.86" width="0.68" height="1.0" fill="#d4d4d4"/><rect x="2.72" y="147.29" width="20.40" height="1.0" fill="#6a9955"/><rect x="2.72" y="150.15" width="2.04" height="1.0" fill="#569cd6"/><rect x="5.44" y="150.15" width="2.04" height="1.0" fill="#9cdcfe"/><rect x="7.48" y="150.15" width="0.68" height="1.0" fill="#d4d4d4"/><rect x="2.72" y="151.58" width="2.72" height="1.0" fill="#569cd6"/><rect x="6.12" y="151.58" width="0.68" height="1.0" fill="#d4d4d4"/><rect x="6.80" y="151.58" width="5.44" height="1.0" fill="#9cdcfe"/><rect x="12.24" y="151.58" width="0.68" height="1.0" fill="#d4d4d4"/><rect x="2.72" y="154.44" width="2.04" height="1.0" fill="#9cdcfe"/><rect x="5.44" y="154.44" width="0.68" height="1.0" fill="#d4d4d4"/><rect x="6.80" y="154.44" width="14.96" height="1.0" fill="#dcdcaa"/><rect x="21.76" y="154.44" width="0.68" height="1.0" fill="#d4d4d4"/><rect x="22.44" y="154.44" width="6.80" height="1.0" fill="#9cdcfe"/><rect x="29.24" y="154.44" width="0.68" height="1.0" fill="#d4d4d4"/><rect x="30.60" y="154.44" width="0.68" height="1.0" fill="#d4d4d4"/><rect x="31.28" y="154.44" width="5.44" height="1.0" fill="#9cdcfe"/><rect x="36.72" y="154.44" width="0.68" height="1.0" fill="#d4d4d4"/><rect x="37.40" y="154.44" width="0.68" height="1.0" fill="#d4d4d4"/><rect x="2.72" y="155.87" width="1.36" height="1.0" fill="#c586c0"/><rect x="4.76" y="155.87" width="0.68" height="1.0" fill="#d4d4d4"/><rect x="5.44" y="155.87" width="2.04" height="1.0" fill="#9cdcfe"/><rect x="8.16" y="155.87" width="0.68" height="1.0" fill="#d4d4d4"/><rect x="8.84" y="155.87" width="0.68" height="1.0" fill="#d4d4d4"/><rect x="10.20" y="155.87" width="9.52" height="1.0" fill="#d4d4d4"/><rect x="19.72" y="155.87" width="0.68" height="1.0" fill="#d4d4d4"/><rect x="21.08" y="155.87" width="0.68" height="1.0" fill="#d4d4d4"/><rect x="5.44" y="157.30" width="6.80" height="1.0" fill="#dcdcaa"/><rect x="12.24" y="157.30" width="0.68" height="1.0" fill="#d4d4d4"/><rect x="12.92" y="157.30" width="6.80" height="1.0" fill="#d4d4d4"/><rect x="19.72" y="157.30" width="0.68" height="1.0" fill="#d4d4d4"/><rect x="21.08" y="157.30" width="4.76" height="1.0" fill="#d4d4d4"/><rect x="25.84" y="157.30" width="0.68" height="1.0" fill="#d4d4d4"/><rect x="27.20" y="157.30" width="14.96" height="1.0" fill="#ce9178"/><rect x="42.84" y="157.30" width="4.76" height="1.0" fill="#ce9178"/><rect x="48.28" y="157.30" width="2.04" height="1.0" fill="#ce9178"/><rect x="51.00" y="157.30" width="0.68" height="1.0" fill="#ce9178"/><rect x="52.36" y="157.30" width="2.72" height="1.0" fill="#ce9178"/><rect x="55.08" y="157.30" width="0.68" height="1.0" fill="#d4d4d4"/><rect x="56.44" y="157.30" width="2.04" height="1.0" fill="#9cdcfe"/><rect x="58.48" y="157.30" width="0.68" height="1.0" fill="#d4d4d4"/><rect x="59.16" y="157.30" width="0.68" height="1.0" fill="#d4d4d4"/><rect x="5.44" y="158.73" width="4.08" height="1.0" fill="#c586c0"/><rect x="9.52" y="158.73" width="0.68" height="1.0" fill="#d4d4d4"/><rect x="2.72" y="160.16" width="0.68" height="1.0" fill="#d4d4d4"/><rect x="2.72" y="163.02" width="1.36" height="1.0" fill="#c586c0"/><rect x="4.76" y="163.02" width="0.68" height="1.0" fill="#d4d4d4"/><rect x="5.44" y="163.02" width="5.44" height="1.0" fill="#9cdcfe"/><rect x="11.56" y="163.02" width="0.68" height="1.0" fill="#d4d4d4"/><rect x="12.24" y="163.02" width="0.68" height="1.0" fill="#d4d4d4"/><rect x="13.60" y="163.02" width="2.72" height="1.0" fill="#569cd6"/><rect x="16.32" y="163.02" width="0.68" height="1.0" fill="#d4d4d4"/><rect x="17.68" y="163.02" width="0.68" height="1.0" fill="#d4d4d4"/><rect x="5.44" y="164.45" width="10.88" height="1.0" fill="#dcdcaa"/><rect x="16.32" y="164.45" width="0.68" height="1.0" fill="#d4d4d4"/><rect x="17.00" y="164.45" width="5.44" height="1.0" fill="#9cdcfe"/><rect x="22.44" y="164.45" width="0.68" height="1.0" fill="#d4d4d4"/><rect x="23.12" y="164.45" width="0.68" height="1.0" fill="#d4d4d4"/><rect x="5.44" y="165.88" width="2.72" height="1.0" fill="#dcdcaa"/><rect x="8.16" y="165.88" width="0.68" height="1.0" fill="#d4d4d4"/><rect x="8.84" y="165.88" width="5.44" height="1.0" fill="#9cdcfe"/><rect x="14.28" y="165.88" width="0.68" height="1.0" fill="#d4d4d4"/><rect x="14.96" y="165.88" width="0.68" height="1.0" fill="#d4d4d4"/><rect x="2.72" y="167.31" width="0.68" height="1.0" fill="#d4d4d4"/><rect x="0.00" y="168.74" width="0.68" height="1.0" fill="#d4d4d4"/><rect x="0.00" y="171.60" width="4.08" height="1.0" fill="#569cd6"/><rect x="4.76" y="171.60" width="2.72" height="1.0" fill="#569cd6"/><rect x="0.00" y="173.03" width="14.28" height="1.0" fill="#dcdcaa"/><rect x="14.28" y="173.03" width="0.68" height="1.0" fill="#d4d4d4"/><rect x="14.96" y="173.03" width="10.88" height="1.0" fill="#d4d4d4"/><rect x="26.52" y="173.03" width="6.80" height="1.0" fill="#9cdcfe"/><rect x="33.32" y="173.03" width="0.68" height="1.0" fill="#d4d4d4"/><rect x="34.68" y="173.03" width="2.72" height="1.0" fill="#569cd6"/><rect x="38.08" y="173.03" width="0.68" height="1.0" fill="#d4d4d4"/><rect x="38.76" y="173.03" width="6.12" height="1.0" fill="#9cdcfe"/><rect x="44.88" y="173.03" width="0.68" height="1.0" fill="#d4d4d4"/><rect x="0.00" y="174.46" width="0.68" height="1.0" fill="#d4d4d4"/><rect x="2.72" y="175.89" width="27.20" height="1.0" fill="#6a9955"/><rect x="2.72" y="177.32" width="4.08" height="1.0" fill="#c586c0"/><rect x="6.80" y="177.32" width="0.68" height="1.0" fill="#d4d4d4"/><rect x="0.00" y="178.75" width="0.68" height="1.0" fill="#d4d4d4"/><rect x="0.00" y="181.61" width="4.08" height="1.0" fill="#569cd6"/><rect x="4.76" y="181.61" width="2.72" height="1.0" fill="#569cd6"/><rect x="0.00" y="183.04" width="14.28" height="1.0" fill="#dcdcaa"/><rect x="14.28" y="183.04" width="0.68" height="1.0" fill="#d4d4d4"/><rect x="14.96" y="183.04" width="10.88" height="1.0" fill="#d4d4d4"/><rect x="26.52" y="183.04" width="6.80" height="1.0" fill="#9cdcfe"/><rect x="33.32" y="183.04" width="0.68" height="1.0" fill="#d4d4d4"/><rect x="34.68" y="183.04" width="2.72" height="1.0" fill="#569cd6"/><rect x="38.08" y="183.04" width="0.68" height="1.0" fill="#d4d4d4"/><rect x="38.76" y="183.04" width="6.12" height="1.0" fill="#9cdcfe"/><rect x="44.88" y="183.04" width="0.68" height="1.0" fill="#d4d4d4"/><rect x="0.00" y="184.47" width="0.68" height="1.0" fill="#d4d4d4"/><rect x="2.72" y="185.90" width="23.80" height="1.0" fill="#6a9955"/><rect x="0.00" y="187.33" width="0.68" height="1.0" fill="#d4d4d4"/><rect x="0.00" y="190.19" width="4.08" height="1.0" fill="#569cd6"/><rect x="4.76" y="190.19" width="2.72" height="1.0" fill="#569cd6"/><rect x="0.00" y="191.62" width="12.24" height="1.0" fill="#dcdcaa"/><rect x="12.24" y="191.62" width="0.68" height="1.0" fill="#d4d4d4"/><rect x="12.92" y="191.62" width="10.88" height="1.0" fill="#d4d4d4"/><rect x="24.48" y="191.62" width="6.80" height="1.0" fill="#9cdcfe"/><rect x="31.28" y="191.62" width="0.68" height="1.0" fill="#d4d4d4"/><rect x="32.64" y="191.62" width="2.72" height="1.0" fill="#569cd6"/><rect x="36.04" y="191.62" width="0.68" height="1.0" fill="#d4d4d4"/><rect x="36.72" y="191.62" width="6.12" height="1.0" fill="#9cdcfe"/><rect x="42.84" y="191.62" width="0.68" height="1.0" fill="#d4d4d4"/><rect x="0.00" y="193.05" width="0.68" height="1.0" fill="#d4d4d4"/><rect x="2.72" y="194.48" width="17.00" height="1.0" fill="#6a9955"/><rect x="0.00" y="195.91" width="0.68" height="1.0" fill="#d4d4d4"/><rect x="0.00" y="198.77" width="4.08" height="1.0" fill="#569cd6"/><rect x="4.76" y="198.77" width="2.72" height="1.0" fill="#569cd6"/><rect x="0.00" y="200.20" width="11.56" height="1.0" fill="#dcdcaa"/><rect x="11.56" y="200.20" width="0.68" height="1.0" fill="#d4d4d4"/><rect x="12.24" y="200.20" width="10.88" height="1.0" fill="#d4d4d4"/><rect x="23.80" y="200.20" width="6.80" height="1.0" fill="#9cdcfe"/><rect x="30.60" y="200.20" width="0.68" height="1.0" fill="#d4d4d4"/><rect x="31.96" y="200.20" width="2.72" height="1.0" fill="#569cd6"/><rect x="35.36" y="200.20" width="0.68" height="1.0" fill="#d4d4d4"/><rect x="36.04" y="200.20" width="6.12" height="1.0" fill="#9cdcfe"/><rect x="42.16" y="200.20" width="0.68" height="1.0" fill="#d4d4d4"/><rect x="0.00" y="201.63" width="0.68" height="1.0" fill="#d4d4d4"/><rect x="2.72" y="203.06" width="16.32" height="1.0" fill="#6a9955"/><rect x="0.00" y="204.49" width="0.68" height="1.0" fill="#d4d4d4"/><rect x="0.00" y="207.35" width="2.04" height="1.0" fill="#569cd6"/><rect x="0.00" y="208.78" width="2.72" height="1.0" fill="#dcdcaa"/><rect x="2.72" y="208.78" width="0.68" height="1.0" fill="#d4d4d4"/><rect x="3.40" y="208.78" width="2.04" height="1.0" fill="#569cd6"/><rect x="6.12" y="208.78" width="2.72" height="1.0" fill="#9cdcfe"/><rect x="8.84" y="208.78" width="0.68" height="1.0" fill="#d4d4d4"/><rect x="10.20" y="208.78" width="2.72" height="1.0" fill="#569cd6"/><rect x="13.60" y="208.78" width="0.68" height="1.0" fill="#d4d4d4"/><rect x="14.28" y="208.78" width="2.72" height="1.0" fill="#9cdcfe"/><rect x="17.00" y="208.78" width="0.68" height="1.0" fill="#d4d4d4"/><rect x="17.68" y="208.78" width="0.68" height="1.0" fill="#d4d4d4"/><rect x="18.36" y="208.78" width="0.68" height="1.0" fill="#d4d4d4"/><rect x="0.00" y="210.21" width="0.68" height="1.0" fill="#d4d4d4"/><rect x="2.72" y="211.64" width="6.12" height="1.0" fill="#d4d4d4"/><rect x="9.52" y="211.64" width="1.36" height="1.0" fill="#9cdcfe"/><rect x="11.56" y="211.64" width="0.68" height="1.0" fill="#d4d4d4"/><rect x="12.92" y="211.64" width="0.68" height="1.0" fill="#d4d4d4"/><rect x="13.60" y="211.64" width="0.68" height="1.0" fill="#b5cea8"/><rect x="14.28" y="211.64" width="0.68" height="1.0" fill="#d4d4d4"/><rect x="14.96" y="211.64" width="0.68" height="1.0" fill="#d4d4d4"/><rect x="15.64" y="211.64" width="0.68" height="1.0" fill="#d4d4d4"/><rect x="2.72" y="213.07" width="2.04" height="1.0" fill="#569cd6"/><rect x="5.44" y="213.07" width="2.04" height="1.0" fill="#9cdcfe"/><rect x="8.16" y="213.07" width="0.68" height="1.0" fill="#d4d4d4"/><rect x="9.52" y="213.07" width="0.68" height="1.0" fill="#b5cea8"/><rect x="10.20" y="213.07" width="0.68" height="1.0" fill="#d4d4d4"/><rect x="2.72" y="215.93" width="18.36" height="1.0" fill="#d4d4d4"/><rect x="21.76" y="215.93" width="9.52" height="1.0" fill="#9cdcfe"/><rect x="31.96" y="215.93" width="0.68" height="1.0" fill="#d4d4d4"/><rect x="33.32" y="215.93" width="0.68" height="1.0" fill="#d4d4d4"/><rect x="34.00" y="215.93" width="0.68" height="1.0" fill="#b5cea8"/><rect x="34.68" y="215.93" width="0.68" height="1.0" fill="#d4d4d4"/><rect x="35.36" y="215.93" width="0.68" height="1.0" fill="#d4d4d4"/><rect x="36.04" y="215.93" width="0.68" height="1.0" fill="#d4d4d4"/><rect x="2.72" y="217.36" width="12.92" height="1.0" fill="#d4d4d4"/><rect x="16.32" y="217.36" width="5.44" height="1.0" fill="#9cdcfe"/><rect x="21.76" y="217.36" width="0.68" height="1.0" fill="#d4d4d4"/><rect x="22.44" y="217.36" width="0.68" height="1.0" fill="#b5cea8"/><rect x="23.12" y="217.36" width="0.68" height="1.0" fill="#d4d4d4"/><rect x="24.48" y="217.36" width="0.68" height="1.0" fill="#d4d4d4"/><rect x="25.84" y="217.36" width="0.68" height="1.0" fill="#d4d4d4"/><rect x="26.52" y="217.36" width="2.72" height="1.0" fill="#569cd6"/><rect x="29.24" y="217.36" width="0.68" height="1.0" fill="#d4d4d4"/><rect x="30.60" y="217.36" width="0.68" height="1.0" fill="#d4d4d4"/><rect x="31.28" y="217.36" width="0.68" height="1.0" fill="#d4d4d4"/><rect x="2.72" y="220.22" width="9.52" height="1.0" fill="#9cdcfe"/><rect x="12.24" y="220.22" width="0.68" height="1.0" fill="#d4d4d4"/><rect x="12.92" y="220.22" width="4.08" height="1.0" fill="#9cdcfe"/><rect x="17.68" y="220.22" width="0.68" height="1.0" fill="#d4d4d4"/><rect x="19.04" y="220.22" width="6.80" height="1.0" fill="#d4d4d4"/><rect x="25.84" y="220.22" width="0.68" height="1.0" fill="#d4d4d4"/><rect x="2.72" y="221.65" width="9.52" height="1.0" fill="#9cdcfe"/><rect x="12.24" y="221.65" width="0.68" height="1.0" fill="#d4d4d4"/><rect x="12.92" y="221.65" width="6.12" height="1.0" fill="#9cdcfe"/><rect x="19.72" y="221.65" width="0.68" height="1.0" fill="#d4d4d4"/><rect x="21.08" y="221.65" width="8.84" height="1.0" fill="#d4d4d4"/><rect x="29.92" y="221.65" width="0.68" height="1.0" fill="#d4d4d4"/><rect x="2.72" y="223.08" width="9.52" height="1.0" fill="#9cdcfe"/><rect x="12.24" y="223.08" width="0.68" height="1.0" fill="#d4d4d4"/><rect x="12.92" y="223.08" width="3.40" height="1.0" fill="#9cdcfe"/><rect x="17.00" y="223.08" width="0.68" height="1.0" fill="#d4d4d4"/><rect x="18.36" y="223.08" width="6.12" height="1.0" fill="#d4d4d4"/><rect x="24.48" y="223.08" width="0.68" height="1.0" fill="#d4d4d4"/><rect x="2.72" y="224.51" width="9.52" height="1.0" fill="#9cdcfe"/><rect x="12.24" y="224.51" width="0.68" height="1.0" fill="#d4d4d4"/><rect x="12.92" y="224.51" width="4.08" height="1.0" fill="#9cdcfe"/><rect x="17.68" y="224.51" width="0.68" height="1.0" fill="#d4d4d4"/><rect x="19.04" y="224.51" width="6.80" height="1.0" fill="#d4d4d4"/><rect x="25.84" y="224.51" width="0.68" height="1.0" fill="#d4d4d4"/><rect x="2.72" y="225.94" width="9.52" height="1.0" fill="#9cdcfe"/><rect x="12.24" y="225.94" width="0.68" height="1.0" fill="#d4d4d4"/><rect x="12.92" y="225.94" width="7.48" height="1.0" fill="#9cdcfe"/><rect x="21.08" y="225.94" width="0.68" height="1.0" fill="#d4d4d4"/><rect x="22.44" y="225.94" width="7.48" height="1.0" fill="#9cdcfe"/><rect x="29.92" y="225.94" width="0.68" height="1.0" fill="#d4d4d4"/><rect x="2.72" y="228.80" width="16.32" height="1.0" fill="#dcdcaa"/><rect x="19.04" y="228.80" width="0.68" height="1.0" fill="#d4d4d4"/><rect x="19.72" y="228.80" width="0.68" height="1.0" fill="#d4d4d4"/><rect x="20.40" y="228.80" width="5.44" height="1.0" fill="#9cdcfe"/><rect x="25.84" y="228.80" width="0.68" height="1.0" fill="#d4d4d4"/><rect x="26.52" y="228.80" width="14.28" height="1.0" fill="#d4d4d4"/><rect x="40.80" y="228.80" width="0.68" height="1.0" fill="#d4d4d4"/><rect x="41.48" y="228.80" width="0.68" height="1.0" fill="#d4d4d4"/><rect x="42.84" y="228.80" width="14.28" height="1.0" fill="#d4d4d4"/><rect x="57.12" y="228.80" width="0.68" height="1.0" fill="#d4d4d4"/><rect x="58.48" y="228.80" width="12.24" height="1.0" fill="#d4d4d4"/><rect x="70.72" y="228.80" width="0.68" height="1.0" fill="#d4d4d4"/><rect x="72.08" y="228.80" width="0.68" height="1.0" fill="#d4d4d4"/><rect x="72.76" y="228.80" width="1.36" height="1.0" fill="#9cdcfe"/><rect x="74.12" y="228.80" width="0.68" height="1.0" fill="#d4d4d4"/><rect x="74.80" y="228.80" width="0.68" height="1.0" fill="#d4d4d4"/><rect x="2.72" y="230.23" width="16.32" height="1.0" fill="#dcdcaa"/><rect x="19.04" y="230.23" width="0.68" height="1.0" fill="#d4d4d4"/><rect x="19.72" y="230.23" width="0.68" height="1.0" fill="#d4d4d4"/><rect x="20.40" y="230.23" width="5.44" height="1.0" fill="#9cdcfe"/><rect x="25.84" y="230.23" width="0.68" height="1.0" fill="#d4d4d4"/><rect x="26.52" y="230.23" width="13.60" height="1.0" fill="#d4d4d4"/><rect x="40.12" y="230.23" width="0.68" height="1.0" fill="#d4d4d4"/><rect x="40.80" y="230.23" width="0.68" height="1.0" fill="#d4d4d4"/><rect x="42.16" y="230.23" width="13.60" height="1.0" fill="#d4d4d4"/><rect x="55.76" y="230.23" width="0.68" height="1.0" fill="#d4d4d4"/><rect x="57.12" y="230.23" width="11.56" height="1.0" fill="#d4d4d4"/><rect x="68.68" y="230.23" width="0.68" height="1.0" fill="#d4d4d4"/><rect x="70.04" y="230.23" width="0.68" height="1.0" fill="#d4d4d4"/><rect x="70.72" y="230.23" width="1.36" height="1.0" fill="#9cdcfe"/><rect x="72.08" y="230.23" width="0.68" height="1.0" fill="#d4d4d4"/><rect x="72.76" y="230.23" width="0.68" height="1.0" fill="#d4d4d4"/><rect x="2.72" y="231.66" width="16.32" height="1.0" fill="#dcdcaa"/><rect x="19.04" y="231.66" width="0.68" height="1.0" fill="#d4d4d4"/><rect x="19.72" y="231.66" width="0.68" height="1.0" fill="#d4d4d4"/><rect x="20.40" y="231.66" width="5.44" height="1.0" fill="#9cdcfe"/><rect x="25.84" y="231.66" width="0.68" height="1.0" fill="#d4d4d4"/><rect x="26.52" y="231.66" width="24.48" height="1.0" fill="#d4d4d4"/><rect x="51.00" y="231.66" width="0.68" height="1.0" fill="#d4d4d4"/><rect x="51.68" y="231.66" width="0.68" height="1.0" fill="#d4d4d4"/><rect x="53.04" y="231.66" width="24.48" height="1.0" fill="#d4d4d4"/><rect x="77.52" y="231.66" width="0.68" height="1.0" fill="#d4d4d4"/><rect x="78.88" y="231.66" width="14.28" height="1.0" fill="#d4d4d4"/><rect x="93.16" y="231.66" width="0.68" height="1.0" fill="#d4d4d4"/><rect x="94.52" y="231.66" width="0.68" height="1.0" fill="#d4d4d4"/><rect x="95.20" y="231.66" width="1.36" height="1.0" fill="#9cdcfe"/><rect x="96.56" y="231.66" width="0.68" height="1.0" fill="#d4d4d4"/><rect x="97.24" y="231.66" width="0.68" height="1.0" fill="#d4d4d4"/><rect x="2.72" y="233.09" width="16.32" height="1.0" fill="#dcdcaa"/><rect x="19.04" y="233.09" width="0.68" height="1.0" fill="#d4d4d4"/><rect x="19.72" y="233.09" width="0.68" height="1.0" fill="#d4d4d4"/><rect x="20.40" y="233.09" width="5.44" height="1.0" fill="#9cdcfe"/><rect x="25.84" y="233.09" width="0.68" height="1.0" fill="#d4d4d4"/><rect x="26.52" y="233.09" width="17.68" height="1.0" fill="#d4d4d4"/><rect x="44.20" y="233.09" width="0.68" height="1.0" fill="#d4d4d4"/><rect x="44.88" y="233.09" width="0.68" height="1.0" fill="#d4d4d4"/><rect x="46.24" y="233.09" width="17.68" height="1.0" fill="#d4d4d4"/><rect x="63.92" y="233.09" width="0.68" height="1.0" fill="#d4d4d4"/><rect x="65.28" y="233.09" width="12.92" height="1.0" fill="#d4d4d4"/><rect x="78.20" y="233.09" width="0.68" height="1.0" fill="#d4d4d4"/><rect x="79.56" y="233.09" width="0.68" height="1.0" fill="#d4d4d4"/><rect x="80.24" y="233.09" width="1.36" height="1.0" fill="#9cdcfe"/><rect x="81.60" y="233.09" width="0.68" height="1.0" fill="#d4d4d4"/><rect x="82.28" y="233.09" width="0.68" height="1.0" fill="#d4d4d4"/><rect x="2.72" y="234.52" width="16.32" height="1.0" fill="#dcdcaa"/><rect x="19.04" y="234.52" width="0.68" height="1.0" fill="#d4d4d4"/><rect x="19.72" y="234.52" width="0.68" height="1.0" fill="#d4d4d4"/><rect x="20.40" y="234.52" width="5.44" height="1.0" fill="#9cdcfe"/><rect x="25.84" y="234.52" width="0.68" height="1.0" fill="#d4d4d4"/><rect x="26.52" y="234.52" width="21.08" height="1.0" fill="#d4d4d4"/><rect x="47.60" y="234.52" width="0.68" height="1.0" fill="#d4d4d4"/><rect x="48.28" y="234.52" width="0.68" height="1.0" fill="#d4d4d4"/><rect x="49.64" y="234.52" width="21.08" height="1.0" fill="#d4d4d4"/><rect x="70.72" y="234.52" width="0.68" height="1.0" fill="#d4d4d4"/><rect x="72.08" y="234.52" width="14.28" height="1.0" fill="#d4d4d4"/><rect x="86.36" y="234.52" width="0.68" height="1.0" fill="#d4d4d4"/><rect x="87.72" y="234.52" width="0.68" height="1.0" fill="#d4d4d4"/><rect x="88.40" y="234.52" width="1.36" height="1.0" fill="#9cdcfe"/><rect x="89.76" y="234.52" width="0.68" height="1.0" fill="#d4d4d4"/><rect x="90.44" y="234.52" width="0.68" height="1.0" fill="#d4d4d4"/><rect x="2.72" y="237.38" width="2.04" height="1.0" fill="#9cdcfe"/><rect x="5.44" y="237.38" width="0.68" height="1.0" fill="#d4d4d4"/><rect x="6.80" y="237.38" width="7.48" height="1.0" fill="#dcdcaa"/><rect x="14.28" y="237.38" width="0.68" height="1.0" fill="#d4d4d4"/><rect x="14.96" y="237.38" width="2.72" height="1.0" fill="#9cdcfe"/><rect x="17.68" y="237.38" width="0.68" height="1.0" fill="#d4d4d4"/><rect x="19.04" y="237.38" width="2.72" height="1.0" fill="#9cdcfe"/><rect x="21.76" y="237.38" width="0.68" height="1.0" fill="#d4d4d4"/><rect x="23.12" y="237.38" width="0.68" height="1.0" fill="#d4d4d4"/><rect x="23.80" y="237.38" width="9.52" height="1.0" fill="#9cdcfe"/><rect x="33.32" y="237.38" width="0.68" height="1.0" fill="#d4d4d4"/><rect x="34.68" y="237.38" width="0.68" height="1.0" fill="#d4d4d4"/><rect x="35.36" y="237.38" width="1.36" height="1.0" fill="#9cdcfe"/><rect x="36.72" y="237.38" width="0.68" height="1.0" fill="#d4d4d4"/><rect x="37.40" y="237.38" width="0.68" height="1.0" fill="#d4d4d4"/><rect x="2.72" y="238.81" width="1.36" height="1.0" fill="#c586c0"/><rect x="4.76" y="238.81" width="0.68" height="1.0" fill="#d4d4d4"/><rect x="5.44" y="238.81" width="2.04" height="1.0" fill="#9cdcfe"/><rect x="8.16" y="238.81" width="0.68" height="1.0" fill="#d4d4d4"/><rect x="8.84" y="238.81" width="0.68" height="1.0" fill="#d4d4d4"/><rect x="10.20" y="238.81" width="9.52" height="1.0" fill="#d4d4d4"/><rect x="19.72" y="238.81" width="0.68" height="1.0" fill="#d4d4d4"/><rect x="21.08" y="238.81" width="0.68" height="1.0" fill="#d4d4d4"/><rect x="5.44" y="240.24" width="6.80" height="1.0" fill="#dcdcaa"/><rect x="12.24" y="240.24" width="0.68" height="1.0" fill="#d4d4d4"/><rect x="12.92" y="240.24" width="6.80" height="1.0" fill="#d4d4d4"/><rect x="19.72" y="240.24" width="0.68" height="1.0" fill="#d4d4d4"/><rect x="21.08" y="240.24" width="4.76" height="1.0" fill="#d4d4d4"/><rect x="25.84" y="240.24" width="0.68" height="1.0" fill="#d4d4d4"/><rect x="27.20" y="240.24" width="7.48" height="1.0" fill="#ce9178"/><rect x="35.36" y="240.24" width="1.36" height="1.0" fill="#ce9178"/><rect x="37.40" y="240.24" width="4.76" height="1.0" fill="#ce9178"/><rect x="42.84" y="240.24" width="2.04" height="1.0" fill="#ce9178"/><rect x="45.56" y="240.24" width="0.68" height="1.0" fill="#ce9178"/><rect x="46.92" y="240.24" width="2.04" height="1.0" fill="#ce9178"/><rect x="48.96" y="240.24" width="0.68" height="1.0" fill="#d4d4d4"/><rect x="50.32" y="240.24" width="2.04" height="1.0" fill="#9cdcfe"/><rect x="52.36" y="240.24" width="0.68" height="1.0" fill="#d4d4d4"/><rect x="53.04" y="240.24" width="0.68" height="1.0" fill="#d4d4d4"/><rect x="2.72" y="241.67" width="0.68" height="1.0" fill="#d4d4d4"/><rect x="2.72" y="244.53" width="4.08" height="1.0" fill="#c586c0"/><rect x="7.48" y="244.53" width="2.04" height="1.0" fill="#9cdcfe"/><rect x="9.52" y="244.53" width="0.68" height="1.0" fill="#d4d4d4"/><rect x="0.00" y="245.96" width="0.68" height="1.0" fill="#d4d4d4"/></g></svg>
<div style="position:absolute;left:1252px;top:115px;width:79px;height:1px;background:#264f78;"></div>
<div style="position:absolute;left:1331px;top:75px;width:1px;height:290px;background:#2b2b2b;"></div>
<div style="position:absolute;left:1332px;top:104px;width:11px;height:25px;background:#424242;"></div>
<div style="position:absolute;left:1332px;top:116px;width:11px;height:2px;background:#a0a0a0;"></div>
<div style="position:absolute;left:324px;top:26px;width:110px;height:30px;background:#2d2d2d;"></div>
<div style="position:absolute;left:434px;top:26px;width:110px;height:30px;background:#1e1e1e;"></div>
<svg style="position:absolute;left:337px;top:35.400000000000006px;" width="9.4" height="10" viewBox="0 0 9.4 10"><path d="M3.4 0.6 Q1.9 0.6 1.9 1.9 V3.90 Q1.9 5.00 0.6 5.00 Q1.9 5.00 1.9 6.10 V8.10 Q1.9 9.40 3.4 9.40 M6.00 0.6 Q7.50 0.6 7.50 1.9 V3.90 Q7.50 5.00 8.80 5.00 Q7.50 5.00 7.50 6.10 V8.10 Q7.50 9.40 6.00 9.40" fill="none" stroke="#cbcb41" stroke-width="1.5"/></svg>
<div class="t" style="left:352.20px;top:35.65px;font:400 11.4px/11.4px 'Liberation Sans',sans-serif;color:#969696;transform:scaleX(0.9770);transform-origin:0 0;-webkit-text-stroke:0.12px currentColor;">launch.json</div>
<div class="t" style="left:447.50px;top:35.89px;font:700 11px/11px 'Liberation Sans',sans-serif;color:#519aba;transform:scaleX(0.9441);transform-origin:0 0;">C</div>
<div class="t" style="left:462.60px;top:35.65px;font:400 11.4px/11.4px 'Liberation Sans',sans-serif;color:#ffffff;transform:scaleX(0.9681);transform-origin:0 0;-webkit-text-stroke:0.12px currentColor;">nativeapp.c</div>
<svg style="position:absolute;left:527px;top:36px;" width="10" height="10" viewBox="0 0 10 10"><path d="M0.5 0.5 L9 9 M9 0.5 L0.5 9" stroke="#ffffff" stroke-width="1.2"/></svg>
<svg style="position:absolute;left:1294.5px;top:34.2px;" width="13" height="12" viewBox="0 0 13 12"><rect x="0.6" y="0.6" width="11.6" height="11" rx="1.2" fill="none" stroke="#c5c5c5" stroke-width="1.2"/><path d="M6.4 0.6 V11.6" stroke="#c5c5c5" stroke-width="1.2"/></svg>
<div style="position:absolute;left:1317.6px;top:39px;width:2px;height:2px;background:#c5c5c5;border-radius:1px"></div>
<div style="position:absolute;left:1321.8999999999999px;top:39px;width:2px;height:2px;background:#c5c5c5;border-radius:1px"></div>
<div style="position:absolute;left:1326.1999999999998px;top:39px;width:2px;height:2px;background:#c5c5c5;border-radius:1px"></div>
<div style="position:absolute;left:324px;top:56px;width:1019px;height:19px;background:#1e1e1e;"></div>
<div class="t" style="left:338.50px;top:60.05px;font:400 11.4px/11.4px 'Liberation Sans',sans-serif;color:#a9a9a9;transform:scaleX(1.0000);transform-origin:0 0;-webkit-text-stroke:0.12px currentColor;">nativeapp</div>
<svg style="position:absolute;left:392.2px;top:61.0px;" width="5.0" height="9.4" viewBox="0 0 5.0 9.4"><path d="M0.6 0.6 L4.2 4.7 L0.6 8.8" fill="none" stroke="#a9a9a9" stroke-width="1.2"/></svg>
<div class="t" style="left:401.90px;top:60.05px;font:400 11.4px/11.4px 'Liberation Sans',sans-serif;color:#a9a9a9;transform:scaleX(0.9616);transform-origin:0 0;-webkit-text-stroke:0.12px currentColor;">src</div>
<svg style="position:absolute;left:421.1px;top:61.0px;" width="5.0" height="9.4" viewBox="0 0 5.0 9.4"><path d="M0.6 0.6 L4.2 4.7 L0.6 8.8" fill="none" stroke="#a9a9a9" stroke-width="1.2"/></svg>
<div class="t" style="left:434.50px;top:60.19px;font:700 11px/11px 'Liberation Sans',sans-serif;color:#519aba;transform:scaleX(0.9064);transform-origin:0 0;">C</div>
<div class="t" style="left:449.60px;top:60.05px;font:400 11.4px/11.4px 'Liberation Sans',sans-serif;color:#a9a9a9;transform:scaleX(0.9698);transform-origin:0 0;-webkit-text-stroke:0.12px currentColor;">nativeapp.c</div>
<div style="position:absolute;left:325px;top:75px;width:922px;height:3px;background:linear-gradient(#00000080,#00000000)"></div>
<div style="position:absolute;left:324px;top:365px;width:1019px;height:1px;background:#414141;"></div>
<div class="t" style="left:342.30px;top:375.85px;font:400 11.4px/11.4px 'Liberation Sans',sans-serif;color:#979797;transform:scaleX(0.7393);transform-origin:0 0;-webkit-text-stroke:0.12px currentColor;">PROBLEMS</div>
<div class="t" style="left:410.20px;top:375.85px;font:400 11.4px/11.4px 'Liberation Sans',sans-serif;color:#e7e7e7;transform:scaleX(0.7645);transform-origin:0 0;-webkit-text-stroke:0.12px currentColor;">OUTPUT</div>
<div class="t" style="left:467.10px;top:375.85px;font:400 11.4px/11.4px 'Liberation Sans',sans-serif;color:#979797;transform:scaleX(0.7527);transform-origin:0 0;-webkit-text-stroke:0.12px currentColor;">DEBUG CONSOLE</div>
<div class="t" style="left:562.70px;top:375.85px;font:400 11.4px/11.4px 'Liberation Sans',sans-serif;color:#979797;transform:scaleX(0.7761);transform-origin:0 0;-webkit-text-stroke:0.12px currentColor;">TERMINAL</div>
<div style="position:absolute;left:408px;top:389px;width:40px;height:1px;background:#e7e7e7;"></div>
<div style="position:absolute;left:408px;top:390px;width:40px;height:1px;background:#e7e7e755;"></div>
<div style="position:absolute;left:1077px;top:371px;width:149px;height:20px;background:#3c3c3c;"></div>
<div class="t" style="left:1085.20px;top:377.35px;font:400 11.4px/11.4px 'Liberation Sans',sans-serif;color:#f0f0f0;transform:scaleX(0.9661);transform-origin:0 0;-webkit-text-stroke:0.12px currentColor;">Tizen</div>
<svg style="position:absolute;left:1208.6px;top:378.8px;" width="10" height="6" viewBox="0 0 10 6"><path d="M0.6 0.6 L5 5 L9.4 0.6" fill="none" stroke="#c5c5c5" stroke-width="1.2"/></svg>
<svg style="position:absolute;left:1232.5px;top:376.5px;" width="13" height="11" viewBox="0 0 13 11"><path d="M0 1 H12 M0 4 H12 M0 7 H7 M0 10 H7" stroke="#c5c5c5" stroke-width="1.2"/><path d="M8.6 6.4 L12 10 M12 6.4 L8.6 10" stroke="#c5c5c5" stroke-width="1.1"/></svg>
<svg style="position:absolute;left:1256px;top:374.5px;" width="11" height="13" viewBox="0 0 11 13"><path d="M2.6 6 V3.8 A2.9 2.9 0 0 1 8.4 3.8 V6" fill="none" stroke="#c5c5c5" stroke-width="1.3"/><rect x="0.7" y="6" width="9.6" height="6.4" rx="1.2" fill="none" stroke="#c5c5c5" stroke-width="1.3"/></svg>
<svg style="position:absolute;left:1274px;top:370px;" width="22" height="22" viewBox="0 0 22 22"><path d="M8.8 5.6 H14 L17.2 8.8 V16.4 Q17.2 17.2 16.4 17.2 H9.6 Q8.8 17.2 8.8 16.4 Z M14 5.6 V8.8 H17.2" fill="none" stroke="#474747" stroke-width="1.2"/><path d="M8.6 7.4 A2.3 2.3 0 1 0 7.6 10.6" fill="none" stroke="#474747" stroke-width="1.2"/></svg>
<svg style="position:absolute;left:1302.6px;top:378px;" width="10" height="6" viewBox="0 0 10 6"><path d="M0.6 5.4 L4.8 1 L9 5.4" fill="none" stroke="#c5c5c5" stroke-width="1.2"/></svg>
<svg style="position:absolute;left:1322px;top:376px;" width="9" height="9" viewBox="0 0 9 9"><path d="M0.5 0.5 L8.5 8.5 M8.5 0.5 L0.5 8.5" stroke="#c5c5c5" stroke-width="1.2"/></svg>
<div style="position:absolute;left:325px;top:395px;width:1006px;height:4px;background:linear-gradient(#00000090,#00000000)"></div>
<div class="t" style="left:342.30px;top:404.96px;font:400 11.8px/11.8px 'Liberation Mono',monospace;color:#cccccc;transform:scaleX(0.9521);transform-origin:0 0;-webkit-text-stroke:0.08px currentColor;">__return_cb req_id[1] pkg_type[tpk] pkgid[org.example.nativeapp] key[install_percent] val[93]</div>
<div class="t" style="left:342.30px;top:438.21px;font:400 11.8px/11.8px 'Liberation Mono',monospace;color:#cccccc;transform:scaleX(0.9521);transform-origin:0 0;-webkit-text-stroke:0.08px currentColor;">__return_cb req_id[1] pkg_type[tpk] pkgid[org.example.nativeapp] key[install_percent] val[96]</div>
<div class="t" style="left:342.30px;top:471.46px;font:400 11.8px/11.8px 'Liberation Mono',monospace;color:#cccccc;transform:scaleX(0.9521);transform-origin:0 0;-webkit-text-stroke:0.08px currentColor;">__return_cb req_id[1] pkg_type[tpk] pkgid[org.example.nativeapp] key[install_percent] val[100]</div>
<div class="t" style="left:342.30px;top:504.71px;font:400 11.8px/11.8px 'Liberation Mono',monospace;color:#cccccc;transform:scaleX(0.9521);transform-origin:0 0;-webkit-text-stroke:0.08px currentColor;">__return_cb req_id[1] pkg_type[tpk] pkgid[org.example.nativeapp] key[end] val[ok]</div>
<div class="t" style="left:342.30px;top:537.96px;font:400 11.8px/11.8px 'Liberation Mono',monospace;color:#cccccc;transform:scaleX(0.9521);transform-origin:0 0;-webkit-text-stroke:0.08px currentColor;">spend time for pkgcmd is [823]ms</div>
<div class="t" style="left:342.30px;top:587.83px;font:400 11.8px/11.8px 'Liberation Mono',monospace;color:#cccccc;transform:scaleX(0.9521);transform-origin:0 0;-webkit-text-stroke:0.08px currentColor;">[3/4] RUN nativeapp in org.example.nativeapp</div>
<div class="t" style="left:342.30px;top:604.46px;font:400 11.8px/11.8px 'Liberation Mono',monospace;color:#cccccc;transform:scaleX(0.9521);transform-origin:0 0;-webkit-text-stroke:0.08px currentColor;">... successfully launched</div>
<div class="t" style="left:342.30px;top:654.33px;font:400 11.8px/11.8px 'Liberation Mono',monospace;color:#cccccc;transform:scaleX(0.9521);transform-origin:0 0;-webkit-text-stroke:0.08px currentColor;">[4/4] STAMP obj/build/run.nativeapp.stamp</div>
<div class="t" style="left:342.30px;top:670.96px;font:400 11.8px/11.8px 'Liberation Mono',monospace;color:#cccccc;transform:scaleX(0.9521);transform-origin:0 0;-webkit-text-stroke:0.08px currentColor;">[10:19:08] Launching done!</div>
<div class="t" style="left:342.30px;top:687.58px;font:400 11.8px/11.8px 'Liberation Mono',monospace;color:#cccccc;transform:scaleX(0.9521);transform-origin:0 0;-webkit-text-stroke:0.08px currentColor;">[10:36:46] C:\tizen-studio\library\sdk-utils.bat</div>
<div style="position:absolute;left:1331px;top:395px;width:1px;height:305px;background:#2b2b2b;"></div>
<div class="t" style="left:12.50px;top:705.51px;font:400 10.5px/10.5px 'Liberation Sans',sans-serif;color:#ffffff;transform:scaleX(0.9216);transform-origin:0 0;-webkit-text-stroke:0.12px currentColor;">Go 1.17.5</div>
<svg style="position:absolute;left:56px;top:703px;" width="12" height="15" viewBox="0 0 12 15"><path d="M5.3 1.9 H9.6 L7.9 6.2 H9.9 L4.3 13.4 L5.5 8.7 H3.5 Z" fill="none" stroke="#ffffff" stroke-width="1.1" stroke-linejoin="round"/></svg>
<svg style="position:absolute;left:82.4px;top:704.4px;" width="12" height="12" viewBox="0 0 12 12"><circle cx="5.8" cy="5.8" r="5.1" fill="none" stroke="#ffffff" stroke-width="1.1"/><path d="M3.6 3.6 L8 8 M8 3.6 L3.6 8" stroke="#ffffff" stroke-width="1.1"/></svg>
<div class="t" style="left:97.50px;top:705.51px;font:400 10.5px/10.5px 'Liberation Sans',sans-serif;color:#ffffff;transform:scaleX(0.8905);transform-origin:0 0;-webkit-text-stroke:0.12px currentColor;">0</div>
<svg style="position:absolute;left:107px;top:704.5px;" width="11" height="11" viewBox="0 0 11 11"><path d="M5.3 0.8 L10.3 10.2 H0.5 Z" fill="none" stroke="#ffffff" stroke-width="1.1" stroke-linejoin="round"/><path d="M5.3 4 V7.2 M5.3 8.2 V9.2" stroke="#ffffff" stroke-width="1.1"/></svg>
<div class="t" style="left:121.50px;top:705.51px;font:400 10.5px/10.5px 'Liberation Sans',sans-serif;color:#ffffff;transform:scaleX(0.8905);transform-origin:0 0;-webkit-text-stroke:0.12px currentColor;">0</div>
<svg style="position:absolute;left:140px;top:703.5px;" width="13" height="13" viewBox="0 0 13 13"><path d="M5 1 V6.5 M5 1 L12.6 6 L7.5 9.6" fill="none" stroke="#ffffff" stroke-width="1"/><ellipse cx="4" cy="9.6" rx="2" ry="2.4" fill="none" stroke="#ffffff" stroke-width="1"/><path d="M1 8 L2.2 8.6 M7 8 L5.8 8.6 M1 11.5 L2.2 11 M7 11.5 L5.8 11" stroke="#ffffff" stroke-width="0.9"/></svg>
<div class="t" style="left:155.50px;top:705.51px;font:400 10.5px/10.5px 'Liberation Sans',sans-serif;color:#ffffff;transform:scaleX(0.9766);transform-origin:0 0;-webkit-text-stroke:0.12px currentColor;">Tizen Native Debug: Launch (gdb) (workspace)</div>
<svg style="position:absolute;left:386px;top:705px;" width="11" height="11" viewBox="0 0 11 11"><path d="M0.5 0.5 L10.3 10.3 M10.3 0.5 L0.5 10.3" stroke="#dcdcdc" stroke-width="2.2"/><path d="M0.5 0.5 L10.3 10.3 M10.3 0.5 L0.5 10.3" stroke="#2e2e2e" stroke-width="1.3"/></svg>
<div class="t" style="left:401.30px;top:705.51px;font:400 10.5px/10.5px 'Liberation Sans',sans-serif;color:#ffffff;transform:scaleX(0.9954);transform-origin:0 0;-webkit-text-stroke:0.12px currentColor;">Stop</div>
<svg style="position:absolute;left:438.5px;top:703.5px;" width="10" height="13" viewBox="0 0 10 13"><path d="M4.8 0.5 C5.5 3 9.2 4.5 9.2 8 C9.2 10.3 7.3 11.8 4.8 11.8 C2.3 11.8 0.5 10.3 0.5 8 C0.5 6 1.8 5 2.5 4 C2.6 5.5 3.2 6.2 3.8 6.5 C3.6 4.5 4.2 2.5 4.8 0.5 Z" fill="none" stroke="#ffffff" stroke-width="1"/><path d="M4.8 6.5 C5.6 7.8 6.8 8.4 6.8 9.6 C6.8 10.6 5.9 11.3 4.8 11.3 C3.7 11.3 2.9 10.6 2.9 9.6 C2.9 8.6 4.2 7.8 4.8 6.5 Z" fill="none" stroke="#ffffff" stroke-width="0.9"/></svg>
<svg style="position:absolute;left:463.9px;top:704.5px;" width="12" height="11" viewBox="0 0 12 11"><path d="M0.6 1 H4.5 L5.8 2.6 H11.2 V10.2 H0.6 Z M0.6 4 H11.2" fill="none" stroke="#ffffff" stroke-width="1"/></svg>
<div class="t" style="left:478.50px;top:705.51px;font:400 10.5px/10.5px 'Liberation Sans',sans-serif;color:#ffffff;transform:scaleX(0.9664);transform-origin:0 0;-webkit-text-stroke:0.12px currentColor;">workspace</div>
<svg style="position:absolute;left:544px;top:703.8px;" width="8" height="13" viewBox="0 0 8 13"><rect x="0.6" y="0.6" width="6.8" height="11.6" rx="1" fill="none" stroke="#ffffff" stroke-width="1.1"/><path d="M3 10.4 H5" stroke="#ffffff" stroke-width="1"/></svg>
<div class="t" style="left:556.80px;top:705.51px;font:400 10.5px/10.5px 'Liberation Sans',sans-serif;color:#ffffff;transform:scaleX(0.9497);transform-origin:0 0;-webkit-text-stroke:0.12px currentColor;">Tizen: ready</div>
<svg style="position:absolute;left:707.2px;top:703.5px;" width="10" height="13" viewBox="0 0 10 13"><path d="M4.8 0.5 C5.5 3 9.2 4.5 9.2 8 C9.2 10.3 7.3 11.8 4.8 11.8 C2.3 11.8 0.5 10.3 0.5 8 C0.5 6 1.8 5 2.5 4 C2.6 5.5 3.2 6.2 3.8 6.5 C3.6 4.5 4.2 2.5 4.8 0.5 Z" fill="none" stroke="#ffffff" stroke-width="1"/><path d="M4.8 6.5 C5.6 7.8 6.8 8.4 6.8 9.6 C6.8 10.6 5.9 11.3 4.8 11.3 C3.7 11.3 2.9 10.6 2.9 9.6 C2.9 8.6 4.2 7.8 4.8 6.5 Z" fill="none" stroke="#ffffff" stroke-width="0.9"/></svg>
<svg style="position:absolute;left:733.6px;top:703.8px;" width="10" height="13" viewBox="0 0 10 13"><ellipse cx="4.6" cy="2.6" rx="4" ry="2" fill="none" stroke="#ffffff" stroke-width="1.1"/><path d="M0.6 2.6 V10 C0.6 11.2 2.4 12 4.6 12 C6.8 12 8.6 11.2 8.6 10 V2.6" fill="none" stroke="#ffffff" stroke-width="1.1"/></svg>
<div class="t" style="left:758.10px;top:705.51px;font:400 10.5px/10.5px 'Liberation Sans',sans-serif;color:#ffffff;transform:scaleX(0.9526);transform-origin:0 0;-webkit-text-stroke:0.12px currentColor;">Ln 29, Col 59</div>
<div class="t" style="left:832.30px;top:705.51px;font:400 10.5px/10.5px 'Liberation Sans',sans-serif;color:#ffffff;transform:scaleX(0.9086);transform-origin:0 0;-webkit-text-stroke:0.12px currentColor;">Tab Size: 4</div>
<div class="t" style="left:893.80px;top:705.51px;font:400 10.5px/10.5px 'Liberation Sans',sans-serif;color:#ffffff;transform:scaleX(0.9245);transform-origin:0 0;-webkit-text-stroke:0.12px currentColor;">UTF-8</div>
<div class="t" style="left:935.50px;top:705.51px;font:400 10.5px/10.5px 'Liberation Sans',sans-serif;color:#ffffff;transform:scaleX(0.8060);transform-origin:0 0;-webkit-text-stroke:0.12px currentColor;">CRLF</div>
<div class="t" style="left:972.40px;top:705.51px;font:400 10.5px/10.5px 'Liberation Sans',sans-serif;color:#ffffff;transform:scaleX(0.9100);transform-origin:0 0;-webkit-text-stroke:0.12px currentColor;">C</div>
<svg style="position:absolute;left:993.8px;top:704.5px;" width="11" height="11" viewBox="0 0 11 11"><path d="M5.5 0.8 L10.6 10.2 H0.4 Z" fill="none" stroke="#ffffff" stroke-width="1.1" stroke-linejoin="round"/><path d="M5.5 4 V7.2 M5.5 8.2 V9.2" stroke="#ffffff" stroke-width="1.1"/></svg>
<div class="t" style="left:1008.20px;top:705.51px;font:400 10.5px/10.5px 'Liberation Sans',sans-serif;color:#ffffff;transform:scaleX(0.9625);transform-origin:0 0;-webkit-text-stroke:0.12px currentColor;">Analysis Tools Missing</div>
<svg style="position:absolute;left:1125.2px;top:704.5px;" width="11" height="11" viewBox="0 0 11 11"><path d="M5.5 0.8 L10.6 10.2 H0.4 Z" fill="none" stroke="#ffffff" stroke-width="1.1" stroke-linejoin="round"/><path d="M5.5 4 V7.2 M5.5 8.2 V9.2" stroke="#ffffff" stroke-width="1.1"/></svg>
<div class="t" style="left:1139.20px;top:705.51px;font:400 10.5px/10.5px 'Liberation Sans',sans-serif;color:#ffffff;transform:scaleX(0.9779);transform-origin:0 0;-webkit-text-stroke:0.12px currentColor;">Go Update Available</div>
<div class="t" style="left:1247.80px;top:705.51px;font:400 10.5px/10.5px 'Liberation Sans',sans-serif;color:#ffffff;transform:scaleX(0.9845);transform-origin:0 0;-webkit-text-stroke:0.12px currentColor;">Win32</div>
<svg style="position:absolute;left:1292px;top:704px;" width="13" height="12" viewBox="0 0 13 12"><circle cx="4.5" cy="4.2" r="2.6" fill="none" stroke="#ffffff" stroke-width="1"/><path d="M0.6 11.5 C1 8.5 2.5 7.3 4.5 7.3 C6.5 7.3 8 8.5 8.4 11.5 M7 0.8 H12.4 V5.6 H10 L8.5 7" fill="none" stroke="#ffffff" stroke-width="1"/></svg>
<svg style="position:absolute;left:1319.3px;top:703.8px;" width="12" height="13" viewBox="0 0 12 13"><path d="M1 9.6 H10.4 L9 8 V5 C9 3 7.5 1.6 5.7 1.6 C3.9 1.6 2.4 3 2.4 5 V8 Z M4.3 10.8 C4.5 11.8 6.9 11.8 7.1 10.8" fill="none" stroke="#ffffff" stroke-width="1"/><circle cx="9.6" cy="2.4" r="2.2" fill="#ffffff"/></svg>
</body></html>
